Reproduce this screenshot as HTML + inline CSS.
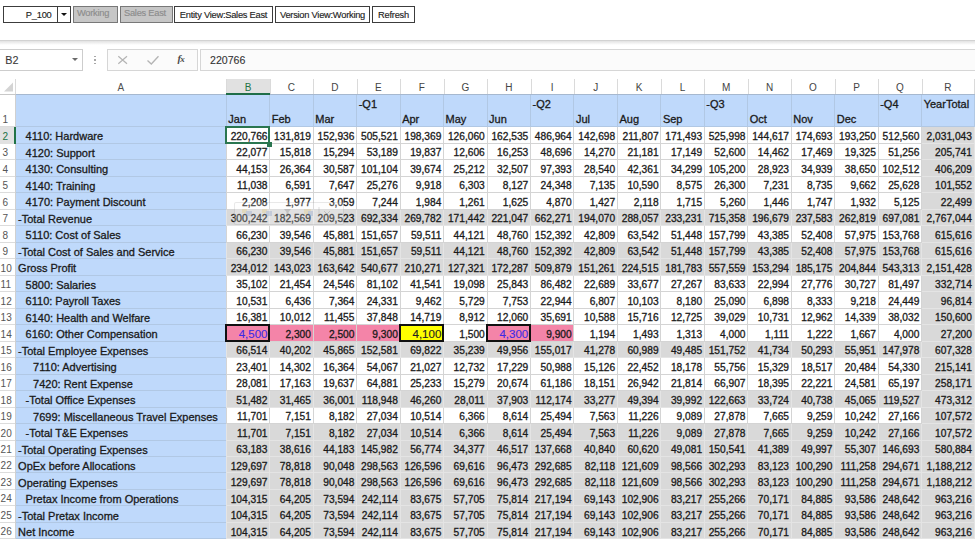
<!DOCTYPE html>
<html><head><meta charset="utf-8"><style>
*{margin:0;padding:0;box-sizing:border-box}
html,body{width:975px;height:539px;overflow:hidden;background:#fff}
body{position:relative;font-family:"Liberation Sans",sans-serif;color:#222}
.a{position:absolute}
.btn{position:absolute;top:6px;height:17px;border:1px solid #3c3c3c;background:#fff;font-size:9.3px;letter-spacing:-0.25px;line-height:16.5px;text-align:center;color:#1e1e1e;white-space:nowrap;-webkit-text-stroke-width:0.15px}
.dis{background:#c6c6c6;color:#8c8c8c;border-color:#787878;text-align:left;padding-left:3px;line-height:13.5px}
.c{position:absolute;white-space:nowrap;font-size:10.2px;color:#1a1a1a;-webkit-text-stroke-width:0.3px}
.n{text-align:right}
.l{font-size:11px}
.ch{position:absolute;top:79.5px;height:15px;font-size:10px;line-height:15px;text-align:center;color:#505050}
.rh{position:absolute;left:0;width:15.6px;font-size:10px;color:#555}
</style></head><body>

<div class="btn" style="left:3px;width:68px;text-align:right;padding-right:18.5px">P_100</div>
<div class="a" style="left:56.5px;top:6px;width:1px;height:17px;background:#3c3c3c"></div>
<div class="a" style="left:61px;top:12.5px;width:0;height:0;border-left:3.2px solid transparent;border-right:3.2px solid transparent;border-top:3.6px solid #111"></div>
<div class="btn dis" style="left:73px;width:45px">Working</div>
<div class="btn dis" style="left:120px;width:53px">Sales East</div>
<div class="btn" style="left:174px;width:99px">Entity View:Sales East</div>
<div class="btn" style="left:275px;width:95px">Version View:Working</div>
<div class="btn" style="left:372px;width:43px">Refresh</div>
<div class="a" style="left:0;top:40px;width:975px;height:1px;background:#d2d2d2"></div>
<div class="a" style="left:0;top:41px;width:975px;height:4px;background:linear-gradient(#e2e2e2,#fff)"></div>
<div class="a" style="left:-1px;top:49px;width:83.5px;height:21.5px;border:1.3px solid #cdcdcd;background:#fff"></div>
<div class="a" style="left:5.2px;top:54px;font-size:10.8px;color:#3a3a3a;-webkit-text-stroke-width:0.1px">B2</div>
<div class="a" style="left:71.5px;top:57.5px;width:0;height:0;border-left:3.2px solid transparent;border-right:3.2px solid transparent;border-top:3.4px solid #6a6a6a"></div>
<div class="a" style="left:94px;top:55.5px;width:2px;height:1.6px;background:#a8a8a8"></div>
<div class="a" style="left:94px;top:59.2px;width:2px;height:1.6px;background:#a8a8a8"></div>
<div class="a" style="left:94px;top:62.5px;width:2px;height:1.6px;background:#a8a8a8"></div>
<div class="a" style="left:107px;top:49px;width:90.8px;height:21.5px;border:1.3px solid #d6d6d6;background:#fbfbfb"></div>
<svg class="a" style="left:117px;top:55px" width="12" height="10"><path d="M1.3 1.2L10 8.8M10 1.2L1.3 8.8" stroke="#b4b4b4" stroke-width="1.2"/></svg>
<svg class="a" style="left:146px;top:55px" width="14" height="10"><path d="M1.5 5.5L5.3 9L12.5 1.2" stroke="#b4b4b4" stroke-width="1.3" fill="none"/></svg>
<div class="a" style="left:177.5px;top:53px;font-family:'Liberation Serif',serif;font-style:italic;font-weight:bold;font-size:10.5px;color:#4a4a4a;letter-spacing:-0.8px">f<span style="font-size:9px">x</span></div>
<div class="a" style="left:200px;top:49px;width:780px;height:21.5px;border:1.3px solid #d6d6d6;background:#fbfbfb"></div>
<div class="a" style="left:210px;top:54px;font-size:10.6px;color:#333;-webkit-text-stroke-width:0.1px">220766</div>
<div class="a" style="left:0;top:79.0px;width:975px;height:15.0px;background:#fff"></div>
<div class="a" style="left:226.3px;top:79.0px;width:43.46px;height:15.0px;background:#e1e1e1"></div>
<svg class="a" style="left:3px;top:82px" width="11" height="10"><path d="M10 0.5L10 9.5L1 9.5Z" fill="#d4d4d4"/></svg>
<div class="a" style="left:15px;top:79.0px;width:1px;height:15.0px;background:#dadada"></div>
<div class="ch" style="left:15.6px;width:210.70000000000002px">A</div>
<div class="ch" style="left:226.3px;width:43.45999999999998px;color:#217346">B</div>
<div class="a" style="left:226.30px;top:79.0px;width:1px;height:15.0px;background:#dadada"></div>
<div class="ch" style="left:269.76px;width:43.460000000000036px;color:#444">C</div>
<div class="a" style="left:269.76px;top:79.0px;width:1px;height:15.0px;background:#dadada"></div>
<div class="ch" style="left:313.22px;width:43.45999999999998px;color:#444">D</div>
<div class="a" style="left:313.22px;top:79.0px;width:1px;height:15.0px;background:#dadada"></div>
<div class="ch" style="left:356.68px;width:43.45999999999998px;color:#444">E</div>
<div class="a" style="left:356.68px;top:79.0px;width:1px;height:15.0px;background:#dadada"></div>
<div class="ch" style="left:400.14px;width:43.460000000000036px;color:#444">F</div>
<div class="a" style="left:400.14px;top:79.0px;width:1px;height:15.0px;background:#dadada"></div>
<div class="ch" style="left:443.6px;width:43.45999999999998px;color:#444">G</div>
<div class="a" style="left:443.60px;top:79.0px;width:1px;height:15.0px;background:#dadada"></div>
<div class="ch" style="left:487.06px;width:43.45999999999998px;color:#444">H</div>
<div class="a" style="left:487.06px;top:79.0px;width:1px;height:15.0px;background:#dadada"></div>
<div class="ch" style="left:530.52px;width:43.460000000000036px;color:#444">I</div>
<div class="a" style="left:530.52px;top:79.0px;width:1px;height:15.0px;background:#dadada"></div>
<div class="ch" style="left:573.98px;width:43.460000000000036px;color:#444">J</div>
<div class="a" style="left:573.98px;top:79.0px;width:1px;height:15.0px;background:#dadada"></div>
<div class="ch" style="left:617.44px;width:43.460000000000036px;color:#444">K</div>
<div class="a" style="left:617.44px;top:79.0px;width:1px;height:15.0px;background:#dadada"></div>
<div class="ch" style="left:660.9000000000001px;width:43.45999999999992px;color:#444">L</div>
<div class="a" style="left:660.90px;top:79.0px;width:1px;height:15.0px;background:#dadada"></div>
<div class="ch" style="left:704.36px;width:43.45999999999992px;color:#444">M</div>
<div class="a" style="left:704.36px;top:79.0px;width:1px;height:15.0px;background:#dadada"></div>
<div class="ch" style="left:747.8199999999999px;width:43.460000000000036px;color:#444">N</div>
<div class="a" style="left:747.82px;top:79.0px;width:1px;height:15.0px;background:#dadada"></div>
<div class="ch" style="left:791.28px;width:43.460000000000036px;color:#444">O</div>
<div class="a" style="left:791.28px;top:79.0px;width:1px;height:15.0px;background:#dadada"></div>
<div class="ch" style="left:834.74px;width:43.460000000000036px;color:#444">P</div>
<div class="a" style="left:834.74px;top:79.0px;width:1px;height:15.0px;background:#dadada"></div>
<div class="ch" style="left:878.2px;width:43.460000000000036px;color:#444">Q</div>
<div class="a" style="left:878.20px;top:79.0px;width:1px;height:15.0px;background:#dadada"></div>
<div class="ch" style="left:921.6600000000001px;width:52.539999999999964px;color:#444">R</div>
<div class="a" style="left:921.66px;top:79.0px;width:1px;height:15.0px;background:#dadada"></div>
<div class="a" style="left:974.2px;top:79.0px;width:1px;height:15.0px;background:#dadada"></div>
<div class="a" style="left:15.6px;top:94.0px;width:210.70000000000002px;height:445.0px;background:#bfd9fb"></div>
<div class="a" style="left:226.3px;top:94.0px;width:747.9000000000001px;height:33.400000000000006px;background:#bfd9fb"></div>
<div class="a" style="left:921.66px;top:127.40px;width:52.54px;height:16.48px;background:#d9d9d9"></div>
<div class="a" style="left:921.66px;top:143.88px;width:52.54px;height:16.48px;background:#d9d9d9"></div>
<div class="a" style="left:921.66px;top:160.36px;width:52.54px;height:16.48px;background:#d9d9d9"></div>
<div class="a" style="left:921.66px;top:176.84px;width:52.54px;height:16.48px;background:#d9d9d9"></div>
<div class="a" style="left:921.66px;top:193.32px;width:52.54px;height:16.48px;background:#d9d9d9"></div>
<div class="a" style="left:226.3px;top:209.80px;width:747.9000000000001px;height:16.48px;background:#d9d9d9"></div>
<div class="a" style="left:921.66px;top:226.28px;width:52.54px;height:16.48px;background:#d9d9d9"></div>
<div class="a" style="left:226.3px;top:242.76px;width:747.9000000000001px;height:16.48px;background:#d9d9d9"></div>
<div class="a" style="left:226.3px;top:259.24px;width:747.9000000000001px;height:16.48px;background:#d9d9d9"></div>
<div class="a" style="left:921.66px;top:275.72px;width:52.54px;height:16.48px;background:#d9d9d9"></div>
<div class="a" style="left:921.66px;top:292.20px;width:52.54px;height:16.48px;background:#d9d9d9"></div>
<div class="a" style="left:921.66px;top:308.68px;width:52.54px;height:16.48px;background:#d9d9d9"></div>
<div class="a" style="left:921.66px;top:325.16px;width:52.54px;height:16.48px;background:#d9d9d9"></div>
<div class="a" style="left:226.3px;top:341.64px;width:747.9000000000001px;height:16.48px;background:#d9d9d9"></div>
<div class="a" style="left:921.66px;top:358.12px;width:52.54px;height:16.48px;background:#d9d9d9"></div>
<div class="a" style="left:921.66px;top:374.60px;width:52.54px;height:16.48px;background:#d9d9d9"></div>
<div class="a" style="left:226.3px;top:391.08px;width:747.9000000000001px;height:16.48px;background:#d9d9d9"></div>
<div class="a" style="left:921.66px;top:407.56px;width:52.54px;height:16.48px;background:#d9d9d9"></div>
<div class="a" style="left:226.3px;top:424.04px;width:747.9000000000001px;height:16.48px;background:#d9d9d9"></div>
<div class="a" style="left:226.3px;top:440.52px;width:747.9000000000001px;height:16.48px;background:#d9d9d9"></div>
<div class="a" style="left:226.3px;top:457.00px;width:747.9000000000001px;height:16.48px;background:#d9d9d9"></div>
<div class="a" style="left:226.3px;top:473.48px;width:747.9000000000001px;height:16.48px;background:#d9d9d9"></div>
<div class="a" style="left:226.3px;top:489.96px;width:747.9000000000001px;height:16.48px;background:#d9d9d9"></div>
<div class="a" style="left:226.3px;top:506.44px;width:747.9000000000001px;height:16.48px;background:#d9d9d9"></div>
<div class="a" style="left:226.3px;top:522.92px;width:747.9000000000001px;height:16.48px;background:#d9d9d9"></div>
<div class="a" style="left:226.30px;top:325.16px;width:43.46px;height:16.48px;background:#f484a8"></div>
<div class="a" style="left:269.76px;top:325.16px;width:43.46px;height:16.48px;background:#f484a8"></div>
<div class="a" style="left:313.22px;top:325.16px;width:43.46px;height:16.48px;background:#f484a8"></div>
<div class="a" style="left:356.68px;top:325.16px;width:43.46px;height:16.48px;background:#f484a8"></div>
<div class="a" style="left:400.14px;top:325.16px;width:43.46px;height:16.48px;background:#ffff00"></div>
<div class="a" style="left:487.06px;top:325.16px;width:43.46px;height:16.48px;background:#f484a8"></div>
<div class="a" style="left:530.52px;top:325.16px;width:43.46px;height:16.48px;background:#f484a8"></div>
<div class="a" style="left:0;top:126.40px;width:15.6px;height:1px;background:#dcdcdc"></div>
<div class="a" style="left:15.6px;top:126.40px;width:210.70000000000002px;height:1px;background:#b1c8e4"></div>
<div class="a" style="left:226.3px;top:126.40px;width:747.9000000000001px;height:1px;background:#b1c8e4"></div>
<div class="a" style="left:0;top:142.88px;width:15.6px;height:1px;background:#dcdcdc"></div>
<div class="a" style="left:15.6px;top:142.88px;width:210.70000000000002px;height:1px;background:#b1c8e4"></div>
<div class="a" style="left:226.3px;top:142.88px;width:695.36px;height:1px;background:#d4d4d4"></div>
<div class="a" style="left:921.66px;top:142.88px;width:52.54px;height:1px;background:#e4e4e4"></div>
<div class="a" style="left:0;top:159.36px;width:15.6px;height:1px;background:#dcdcdc"></div>
<div class="a" style="left:15.6px;top:159.36px;width:210.70000000000002px;height:1px;background:#b1c8e4"></div>
<div class="a" style="left:226.3px;top:159.36px;width:695.36px;height:1px;background:#d4d4d4"></div>
<div class="a" style="left:921.66px;top:159.36px;width:52.54px;height:1px;background:#e4e4e4"></div>
<div class="a" style="left:0;top:175.84px;width:15.6px;height:1px;background:#dcdcdc"></div>
<div class="a" style="left:15.6px;top:175.84px;width:210.70000000000002px;height:1px;background:#b1c8e4"></div>
<div class="a" style="left:226.3px;top:175.84px;width:695.36px;height:1px;background:#d4d4d4"></div>
<div class="a" style="left:921.66px;top:175.84px;width:52.54px;height:1px;background:#e4e4e4"></div>
<div class="a" style="left:0;top:192.32px;width:15.6px;height:1px;background:#dcdcdc"></div>
<div class="a" style="left:15.6px;top:192.32px;width:210.70000000000002px;height:1px;background:#b1c8e4"></div>
<div class="a" style="left:226.3px;top:192.32px;width:695.36px;height:1px;background:#d4d4d4"></div>
<div class="a" style="left:921.66px;top:192.32px;width:52.54px;height:1px;background:#e4e4e4"></div>
<div class="a" style="left:0;top:208.80px;width:15.6px;height:1px;background:#dcdcdc"></div>
<div class="a" style="left:15.6px;top:208.80px;width:210.70000000000002px;height:1px;background:#b1c8e4"></div>
<div class="a" style="left:226.3px;top:208.80px;width:695.36px;height:1px;background:#d4d4d4"></div>
<div class="a" style="left:921.66px;top:208.80px;width:52.54px;height:1px;background:#e4e4e4"></div>
<div class="a" style="left:0;top:225.28px;width:15.6px;height:1px;background:#dcdcdc"></div>
<div class="a" style="left:15.6px;top:225.28px;width:210.70000000000002px;height:1px;background:#b1c8e4"></div>
<div class="a" style="left:226.3px;top:225.28px;width:695.36px;height:1px;background:#e4e4e4"></div>
<div class="a" style="left:921.66px;top:225.28px;width:52.54px;height:1px;background:#e4e4e4"></div>
<div class="a" style="left:0;top:241.76px;width:15.6px;height:1px;background:#dcdcdc"></div>
<div class="a" style="left:15.6px;top:241.76px;width:210.70000000000002px;height:1px;background:#b1c8e4"></div>
<div class="a" style="left:226.3px;top:241.76px;width:695.36px;height:1px;background:#d4d4d4"></div>
<div class="a" style="left:921.66px;top:241.76px;width:52.54px;height:1px;background:#e4e4e4"></div>
<div class="a" style="left:0;top:258.24px;width:15.6px;height:1px;background:#dcdcdc"></div>
<div class="a" style="left:15.6px;top:258.24px;width:210.70000000000002px;height:1px;background:#b1c8e4"></div>
<div class="a" style="left:226.3px;top:258.24px;width:695.36px;height:1px;background:#e4e4e4"></div>
<div class="a" style="left:921.66px;top:258.24px;width:52.54px;height:1px;background:#e4e4e4"></div>
<div class="a" style="left:0;top:274.72px;width:15.6px;height:1px;background:#dcdcdc"></div>
<div class="a" style="left:15.6px;top:274.72px;width:210.70000000000002px;height:1px;background:#b1c8e4"></div>
<div class="a" style="left:226.3px;top:274.72px;width:695.36px;height:1px;background:#e4e4e4"></div>
<div class="a" style="left:921.66px;top:274.72px;width:52.54px;height:1px;background:#e4e4e4"></div>
<div class="a" style="left:0;top:291.20px;width:15.6px;height:1px;background:#dcdcdc"></div>
<div class="a" style="left:15.6px;top:291.20px;width:210.70000000000002px;height:1px;background:#b1c8e4"></div>
<div class="a" style="left:226.3px;top:291.20px;width:695.36px;height:1px;background:#d4d4d4"></div>
<div class="a" style="left:921.66px;top:291.20px;width:52.54px;height:1px;background:#e4e4e4"></div>
<div class="a" style="left:0;top:307.68px;width:15.6px;height:1px;background:#dcdcdc"></div>
<div class="a" style="left:15.6px;top:307.68px;width:210.70000000000002px;height:1px;background:#b1c8e4"></div>
<div class="a" style="left:226.3px;top:307.68px;width:695.36px;height:1px;background:#d4d4d4"></div>
<div class="a" style="left:921.66px;top:307.68px;width:52.54px;height:1px;background:#e4e4e4"></div>
<div class="a" style="left:0;top:324.16px;width:15.6px;height:1px;background:#dcdcdc"></div>
<div class="a" style="left:15.6px;top:324.16px;width:210.70000000000002px;height:1px;background:#b1c8e4"></div>
<div class="a" style="left:226.3px;top:324.16px;width:695.36px;height:1px;background:#d4d4d4"></div>
<div class="a" style="left:921.66px;top:324.16px;width:52.54px;height:1px;background:#e4e4e4"></div>
<div class="a" style="left:0;top:340.64px;width:15.6px;height:1px;background:#dcdcdc"></div>
<div class="a" style="left:15.6px;top:340.64px;width:210.70000000000002px;height:1px;background:#b1c8e4"></div>
<div class="a" style="left:226.3px;top:340.64px;width:695.36px;height:1px;background:#d4d4d4"></div>
<div class="a" style="left:921.66px;top:340.64px;width:52.54px;height:1px;background:#e4e4e4"></div>
<div class="a" style="left:0;top:357.12px;width:15.6px;height:1px;background:#dcdcdc"></div>
<div class="a" style="left:15.6px;top:357.12px;width:210.70000000000002px;height:1px;background:#b1c8e4"></div>
<div class="a" style="left:226.3px;top:357.12px;width:695.36px;height:1px;background:#e4e4e4"></div>
<div class="a" style="left:921.66px;top:357.12px;width:52.54px;height:1px;background:#e4e4e4"></div>
<div class="a" style="left:0;top:373.60px;width:15.6px;height:1px;background:#dcdcdc"></div>
<div class="a" style="left:15.6px;top:373.60px;width:210.70000000000002px;height:1px;background:#b1c8e4"></div>
<div class="a" style="left:226.3px;top:373.60px;width:695.36px;height:1px;background:#d4d4d4"></div>
<div class="a" style="left:921.66px;top:373.60px;width:52.54px;height:1px;background:#e4e4e4"></div>
<div class="a" style="left:0;top:390.08px;width:15.6px;height:1px;background:#dcdcdc"></div>
<div class="a" style="left:15.6px;top:390.08px;width:210.70000000000002px;height:1px;background:#b1c8e4"></div>
<div class="a" style="left:226.3px;top:390.08px;width:695.36px;height:1px;background:#d4d4d4"></div>
<div class="a" style="left:921.66px;top:390.08px;width:52.54px;height:1px;background:#e4e4e4"></div>
<div class="a" style="left:0;top:406.56px;width:15.6px;height:1px;background:#dcdcdc"></div>
<div class="a" style="left:15.6px;top:406.56px;width:210.70000000000002px;height:1px;background:#b1c8e4"></div>
<div class="a" style="left:226.3px;top:406.56px;width:695.36px;height:1px;background:#e4e4e4"></div>
<div class="a" style="left:921.66px;top:406.56px;width:52.54px;height:1px;background:#e4e4e4"></div>
<div class="a" style="left:0;top:423.04px;width:15.6px;height:1px;background:#dcdcdc"></div>
<div class="a" style="left:15.6px;top:423.04px;width:210.70000000000002px;height:1px;background:#b1c8e4"></div>
<div class="a" style="left:226.3px;top:423.04px;width:695.36px;height:1px;background:#d4d4d4"></div>
<div class="a" style="left:921.66px;top:423.04px;width:52.54px;height:1px;background:#e4e4e4"></div>
<div class="a" style="left:0;top:439.52px;width:15.6px;height:1px;background:#dcdcdc"></div>
<div class="a" style="left:15.6px;top:439.52px;width:210.70000000000002px;height:1px;background:#b1c8e4"></div>
<div class="a" style="left:226.3px;top:439.52px;width:695.36px;height:1px;background:#e4e4e4"></div>
<div class="a" style="left:921.66px;top:439.52px;width:52.54px;height:1px;background:#e4e4e4"></div>
<div class="a" style="left:0;top:456.00px;width:15.6px;height:1px;background:#dcdcdc"></div>
<div class="a" style="left:15.6px;top:456.00px;width:210.70000000000002px;height:1px;background:#b1c8e4"></div>
<div class="a" style="left:226.3px;top:456.00px;width:695.36px;height:1px;background:#e4e4e4"></div>
<div class="a" style="left:921.66px;top:456.00px;width:52.54px;height:1px;background:#e4e4e4"></div>
<div class="a" style="left:0;top:472.48px;width:15.6px;height:1px;background:#dcdcdc"></div>
<div class="a" style="left:15.6px;top:472.48px;width:210.70000000000002px;height:1px;background:#b1c8e4"></div>
<div class="a" style="left:226.3px;top:472.48px;width:695.36px;height:1px;background:#e4e4e4"></div>
<div class="a" style="left:921.66px;top:472.48px;width:52.54px;height:1px;background:#e4e4e4"></div>
<div class="a" style="left:0;top:488.96px;width:15.6px;height:1px;background:#dcdcdc"></div>
<div class="a" style="left:15.6px;top:488.96px;width:210.70000000000002px;height:1px;background:#b1c8e4"></div>
<div class="a" style="left:226.3px;top:488.96px;width:695.36px;height:1px;background:#e4e4e4"></div>
<div class="a" style="left:921.66px;top:488.96px;width:52.54px;height:1px;background:#e4e4e4"></div>
<div class="a" style="left:0;top:505.44px;width:15.6px;height:1px;background:#dcdcdc"></div>
<div class="a" style="left:15.6px;top:505.44px;width:210.70000000000002px;height:1px;background:#b1c8e4"></div>
<div class="a" style="left:226.3px;top:505.44px;width:695.36px;height:1px;background:#e4e4e4"></div>
<div class="a" style="left:921.66px;top:505.44px;width:52.54px;height:1px;background:#e4e4e4"></div>
<div class="a" style="left:0;top:521.92px;width:15.6px;height:1px;background:#dcdcdc"></div>
<div class="a" style="left:15.6px;top:521.92px;width:210.70000000000002px;height:1px;background:#b1c8e4"></div>
<div class="a" style="left:226.3px;top:521.92px;width:695.36px;height:1px;background:#e4e4e4"></div>
<div class="a" style="left:921.66px;top:521.92px;width:52.54px;height:1px;background:#e4e4e4"></div>
<div class="a" style="left:0;top:538.40px;width:15.6px;height:1px;background:#dcdcdc"></div>
<div class="a" style="left:15.6px;top:538.40px;width:210.70000000000002px;height:1px;background:#b1c8e4"></div>
<div class="a" style="left:226.3px;top:538.40px;width:695.36px;height:1px;background:#e4e4e4"></div>
<div class="a" style="left:921.66px;top:538.40px;width:52.54px;height:1px;background:#e4e4e4"></div>
<div class="a" style="left:15.1px;top:94.0px;width:1px;height:445.0px;background:#d0d0d0"></div>
<div class="a" style="left:225.80px;top:94.0px;width:1px;height:33.400000000000006px;background:#b1c8e4"></div>
<div class="a" style="left:225.80px;top:127.40px;width:1px;height:16.48px;background:#d4d4d4"></div>
<div class="a" style="left:225.80px;top:143.88px;width:1px;height:16.48px;background:#d4d4d4"></div>
<div class="a" style="left:225.80px;top:160.36px;width:1px;height:16.48px;background:#d4d4d4"></div>
<div class="a" style="left:225.80px;top:176.84px;width:1px;height:16.48px;background:#d4d4d4"></div>
<div class="a" style="left:225.80px;top:193.32px;width:1px;height:16.48px;background:#d4d4d4"></div>
<div class="a" style="left:225.80px;top:209.80px;width:1px;height:16.48px;background:#e4e4e4"></div>
<div class="a" style="left:225.80px;top:226.28px;width:1px;height:16.48px;background:#d4d4d4"></div>
<div class="a" style="left:225.80px;top:242.76px;width:1px;height:16.48px;background:#e4e4e4"></div>
<div class="a" style="left:225.80px;top:259.24px;width:1px;height:16.48px;background:#e4e4e4"></div>
<div class="a" style="left:225.80px;top:275.72px;width:1px;height:16.48px;background:#d4d4d4"></div>
<div class="a" style="left:225.80px;top:292.20px;width:1px;height:16.48px;background:#d4d4d4"></div>
<div class="a" style="left:225.80px;top:308.68px;width:1px;height:16.48px;background:#d4d4d4"></div>
<div class="a" style="left:225.80px;top:325.16px;width:1px;height:16.48px;background:#d4d4d4"></div>
<div class="a" style="left:225.80px;top:341.64px;width:1px;height:16.48px;background:#e4e4e4"></div>
<div class="a" style="left:225.80px;top:358.12px;width:1px;height:16.48px;background:#d4d4d4"></div>
<div class="a" style="left:225.80px;top:374.60px;width:1px;height:16.48px;background:#d4d4d4"></div>
<div class="a" style="left:225.80px;top:391.08px;width:1px;height:16.48px;background:#e4e4e4"></div>
<div class="a" style="left:225.80px;top:407.56px;width:1px;height:16.48px;background:#d4d4d4"></div>
<div class="a" style="left:225.80px;top:424.04px;width:1px;height:16.48px;background:#e4e4e4"></div>
<div class="a" style="left:225.80px;top:440.52px;width:1px;height:16.48px;background:#e4e4e4"></div>
<div class="a" style="left:225.80px;top:457.00px;width:1px;height:16.48px;background:#e4e4e4"></div>
<div class="a" style="left:225.80px;top:473.48px;width:1px;height:16.48px;background:#e4e4e4"></div>
<div class="a" style="left:225.80px;top:489.96px;width:1px;height:16.48px;background:#e4e4e4"></div>
<div class="a" style="left:225.80px;top:506.44px;width:1px;height:16.48px;background:#e4e4e4"></div>
<div class="a" style="left:225.80px;top:522.92px;width:1px;height:16.48px;background:#e4e4e4"></div>
<div class="a" style="left:269.26px;top:94.0px;width:1px;height:33.400000000000006px;background:#b1c8e4"></div>
<div class="a" style="left:269.26px;top:127.40px;width:1px;height:16.48px;background:#d4d4d4"></div>
<div class="a" style="left:269.26px;top:143.88px;width:1px;height:16.48px;background:#d4d4d4"></div>
<div class="a" style="left:269.26px;top:160.36px;width:1px;height:16.48px;background:#d4d4d4"></div>
<div class="a" style="left:269.26px;top:176.84px;width:1px;height:16.48px;background:#d4d4d4"></div>
<div class="a" style="left:269.26px;top:193.32px;width:1px;height:16.48px;background:#d4d4d4"></div>
<div class="a" style="left:269.26px;top:209.80px;width:1px;height:16.48px;background:#e4e4e4"></div>
<div class="a" style="left:269.26px;top:226.28px;width:1px;height:16.48px;background:#d4d4d4"></div>
<div class="a" style="left:269.26px;top:242.76px;width:1px;height:16.48px;background:#e4e4e4"></div>
<div class="a" style="left:269.26px;top:259.24px;width:1px;height:16.48px;background:#e4e4e4"></div>
<div class="a" style="left:269.26px;top:275.72px;width:1px;height:16.48px;background:#d4d4d4"></div>
<div class="a" style="left:269.26px;top:292.20px;width:1px;height:16.48px;background:#d4d4d4"></div>
<div class="a" style="left:269.26px;top:308.68px;width:1px;height:16.48px;background:#d4d4d4"></div>
<div class="a" style="left:269.26px;top:325.16px;width:1px;height:16.48px;background:#d4d4d4"></div>
<div class="a" style="left:269.26px;top:341.64px;width:1px;height:16.48px;background:#e4e4e4"></div>
<div class="a" style="left:269.26px;top:358.12px;width:1px;height:16.48px;background:#d4d4d4"></div>
<div class="a" style="left:269.26px;top:374.60px;width:1px;height:16.48px;background:#d4d4d4"></div>
<div class="a" style="left:269.26px;top:391.08px;width:1px;height:16.48px;background:#e4e4e4"></div>
<div class="a" style="left:269.26px;top:407.56px;width:1px;height:16.48px;background:#d4d4d4"></div>
<div class="a" style="left:269.26px;top:424.04px;width:1px;height:16.48px;background:#e4e4e4"></div>
<div class="a" style="left:269.26px;top:440.52px;width:1px;height:16.48px;background:#e4e4e4"></div>
<div class="a" style="left:269.26px;top:457.00px;width:1px;height:16.48px;background:#e4e4e4"></div>
<div class="a" style="left:269.26px;top:473.48px;width:1px;height:16.48px;background:#e4e4e4"></div>
<div class="a" style="left:269.26px;top:489.96px;width:1px;height:16.48px;background:#e4e4e4"></div>
<div class="a" style="left:269.26px;top:506.44px;width:1px;height:16.48px;background:#e4e4e4"></div>
<div class="a" style="left:269.26px;top:522.92px;width:1px;height:16.48px;background:#e4e4e4"></div>
<div class="a" style="left:312.72px;top:94.0px;width:1px;height:33.400000000000006px;background:#b1c8e4"></div>
<div class="a" style="left:312.72px;top:127.40px;width:1px;height:16.48px;background:#d4d4d4"></div>
<div class="a" style="left:312.72px;top:143.88px;width:1px;height:16.48px;background:#d4d4d4"></div>
<div class="a" style="left:312.72px;top:160.36px;width:1px;height:16.48px;background:#d4d4d4"></div>
<div class="a" style="left:312.72px;top:176.84px;width:1px;height:16.48px;background:#d4d4d4"></div>
<div class="a" style="left:312.72px;top:193.32px;width:1px;height:16.48px;background:#d4d4d4"></div>
<div class="a" style="left:312.72px;top:209.80px;width:1px;height:16.48px;background:#e4e4e4"></div>
<div class="a" style="left:312.72px;top:226.28px;width:1px;height:16.48px;background:#d4d4d4"></div>
<div class="a" style="left:312.72px;top:242.76px;width:1px;height:16.48px;background:#e4e4e4"></div>
<div class="a" style="left:312.72px;top:259.24px;width:1px;height:16.48px;background:#e4e4e4"></div>
<div class="a" style="left:312.72px;top:275.72px;width:1px;height:16.48px;background:#d4d4d4"></div>
<div class="a" style="left:312.72px;top:292.20px;width:1px;height:16.48px;background:#d4d4d4"></div>
<div class="a" style="left:312.72px;top:308.68px;width:1px;height:16.48px;background:#d4d4d4"></div>
<div class="a" style="left:312.72px;top:325.16px;width:1px;height:16.48px;background:#d4d4d4"></div>
<div class="a" style="left:312.72px;top:341.64px;width:1px;height:16.48px;background:#e4e4e4"></div>
<div class="a" style="left:312.72px;top:358.12px;width:1px;height:16.48px;background:#d4d4d4"></div>
<div class="a" style="left:312.72px;top:374.60px;width:1px;height:16.48px;background:#d4d4d4"></div>
<div class="a" style="left:312.72px;top:391.08px;width:1px;height:16.48px;background:#e4e4e4"></div>
<div class="a" style="left:312.72px;top:407.56px;width:1px;height:16.48px;background:#d4d4d4"></div>
<div class="a" style="left:312.72px;top:424.04px;width:1px;height:16.48px;background:#e4e4e4"></div>
<div class="a" style="left:312.72px;top:440.52px;width:1px;height:16.48px;background:#e4e4e4"></div>
<div class="a" style="left:312.72px;top:457.00px;width:1px;height:16.48px;background:#e4e4e4"></div>
<div class="a" style="left:312.72px;top:473.48px;width:1px;height:16.48px;background:#e4e4e4"></div>
<div class="a" style="left:312.72px;top:489.96px;width:1px;height:16.48px;background:#e4e4e4"></div>
<div class="a" style="left:312.72px;top:506.44px;width:1px;height:16.48px;background:#e4e4e4"></div>
<div class="a" style="left:312.72px;top:522.92px;width:1px;height:16.48px;background:#e4e4e4"></div>
<div class="a" style="left:356.18px;top:94.0px;width:1px;height:33.400000000000006px;background:#b1c8e4"></div>
<div class="a" style="left:356.18px;top:127.40px;width:1px;height:16.48px;background:#d4d4d4"></div>
<div class="a" style="left:356.18px;top:143.88px;width:1px;height:16.48px;background:#d4d4d4"></div>
<div class="a" style="left:356.18px;top:160.36px;width:1px;height:16.48px;background:#d4d4d4"></div>
<div class="a" style="left:356.18px;top:176.84px;width:1px;height:16.48px;background:#d4d4d4"></div>
<div class="a" style="left:356.18px;top:193.32px;width:1px;height:16.48px;background:#d4d4d4"></div>
<div class="a" style="left:356.18px;top:209.80px;width:1px;height:16.48px;background:#e4e4e4"></div>
<div class="a" style="left:356.18px;top:226.28px;width:1px;height:16.48px;background:#d4d4d4"></div>
<div class="a" style="left:356.18px;top:242.76px;width:1px;height:16.48px;background:#e4e4e4"></div>
<div class="a" style="left:356.18px;top:259.24px;width:1px;height:16.48px;background:#e4e4e4"></div>
<div class="a" style="left:356.18px;top:275.72px;width:1px;height:16.48px;background:#d4d4d4"></div>
<div class="a" style="left:356.18px;top:292.20px;width:1px;height:16.48px;background:#d4d4d4"></div>
<div class="a" style="left:356.18px;top:308.68px;width:1px;height:16.48px;background:#d4d4d4"></div>
<div class="a" style="left:356.18px;top:325.16px;width:1px;height:16.48px;background:#d4d4d4"></div>
<div class="a" style="left:356.18px;top:341.64px;width:1px;height:16.48px;background:#e4e4e4"></div>
<div class="a" style="left:356.18px;top:358.12px;width:1px;height:16.48px;background:#d4d4d4"></div>
<div class="a" style="left:356.18px;top:374.60px;width:1px;height:16.48px;background:#d4d4d4"></div>
<div class="a" style="left:356.18px;top:391.08px;width:1px;height:16.48px;background:#e4e4e4"></div>
<div class="a" style="left:356.18px;top:407.56px;width:1px;height:16.48px;background:#d4d4d4"></div>
<div class="a" style="left:356.18px;top:424.04px;width:1px;height:16.48px;background:#e4e4e4"></div>
<div class="a" style="left:356.18px;top:440.52px;width:1px;height:16.48px;background:#e4e4e4"></div>
<div class="a" style="left:356.18px;top:457.00px;width:1px;height:16.48px;background:#e4e4e4"></div>
<div class="a" style="left:356.18px;top:473.48px;width:1px;height:16.48px;background:#e4e4e4"></div>
<div class="a" style="left:356.18px;top:489.96px;width:1px;height:16.48px;background:#e4e4e4"></div>
<div class="a" style="left:356.18px;top:506.44px;width:1px;height:16.48px;background:#e4e4e4"></div>
<div class="a" style="left:356.18px;top:522.92px;width:1px;height:16.48px;background:#e4e4e4"></div>
<div class="a" style="left:399.64px;top:94.0px;width:1px;height:33.400000000000006px;background:#b1c8e4"></div>
<div class="a" style="left:399.64px;top:127.40px;width:1px;height:16.48px;background:#d4d4d4"></div>
<div class="a" style="left:399.64px;top:143.88px;width:1px;height:16.48px;background:#d4d4d4"></div>
<div class="a" style="left:399.64px;top:160.36px;width:1px;height:16.48px;background:#d4d4d4"></div>
<div class="a" style="left:399.64px;top:176.84px;width:1px;height:16.48px;background:#d4d4d4"></div>
<div class="a" style="left:399.64px;top:193.32px;width:1px;height:16.48px;background:#d4d4d4"></div>
<div class="a" style="left:399.64px;top:209.80px;width:1px;height:16.48px;background:#e4e4e4"></div>
<div class="a" style="left:399.64px;top:226.28px;width:1px;height:16.48px;background:#d4d4d4"></div>
<div class="a" style="left:399.64px;top:242.76px;width:1px;height:16.48px;background:#e4e4e4"></div>
<div class="a" style="left:399.64px;top:259.24px;width:1px;height:16.48px;background:#e4e4e4"></div>
<div class="a" style="left:399.64px;top:275.72px;width:1px;height:16.48px;background:#d4d4d4"></div>
<div class="a" style="left:399.64px;top:292.20px;width:1px;height:16.48px;background:#d4d4d4"></div>
<div class="a" style="left:399.64px;top:308.68px;width:1px;height:16.48px;background:#d4d4d4"></div>
<div class="a" style="left:399.64px;top:325.16px;width:1px;height:16.48px;background:#d4d4d4"></div>
<div class="a" style="left:399.64px;top:341.64px;width:1px;height:16.48px;background:#e4e4e4"></div>
<div class="a" style="left:399.64px;top:358.12px;width:1px;height:16.48px;background:#d4d4d4"></div>
<div class="a" style="left:399.64px;top:374.60px;width:1px;height:16.48px;background:#d4d4d4"></div>
<div class="a" style="left:399.64px;top:391.08px;width:1px;height:16.48px;background:#e4e4e4"></div>
<div class="a" style="left:399.64px;top:407.56px;width:1px;height:16.48px;background:#d4d4d4"></div>
<div class="a" style="left:399.64px;top:424.04px;width:1px;height:16.48px;background:#e4e4e4"></div>
<div class="a" style="left:399.64px;top:440.52px;width:1px;height:16.48px;background:#e4e4e4"></div>
<div class="a" style="left:399.64px;top:457.00px;width:1px;height:16.48px;background:#e4e4e4"></div>
<div class="a" style="left:399.64px;top:473.48px;width:1px;height:16.48px;background:#e4e4e4"></div>
<div class="a" style="left:399.64px;top:489.96px;width:1px;height:16.48px;background:#e4e4e4"></div>
<div class="a" style="left:399.64px;top:506.44px;width:1px;height:16.48px;background:#e4e4e4"></div>
<div class="a" style="left:399.64px;top:522.92px;width:1px;height:16.48px;background:#e4e4e4"></div>
<div class="a" style="left:443.10px;top:94.0px;width:1px;height:33.400000000000006px;background:#b1c8e4"></div>
<div class="a" style="left:443.10px;top:127.40px;width:1px;height:16.48px;background:#d4d4d4"></div>
<div class="a" style="left:443.10px;top:143.88px;width:1px;height:16.48px;background:#d4d4d4"></div>
<div class="a" style="left:443.10px;top:160.36px;width:1px;height:16.48px;background:#d4d4d4"></div>
<div class="a" style="left:443.10px;top:176.84px;width:1px;height:16.48px;background:#d4d4d4"></div>
<div class="a" style="left:443.10px;top:193.32px;width:1px;height:16.48px;background:#d4d4d4"></div>
<div class="a" style="left:443.10px;top:209.80px;width:1px;height:16.48px;background:#e4e4e4"></div>
<div class="a" style="left:443.10px;top:226.28px;width:1px;height:16.48px;background:#d4d4d4"></div>
<div class="a" style="left:443.10px;top:242.76px;width:1px;height:16.48px;background:#e4e4e4"></div>
<div class="a" style="left:443.10px;top:259.24px;width:1px;height:16.48px;background:#e4e4e4"></div>
<div class="a" style="left:443.10px;top:275.72px;width:1px;height:16.48px;background:#d4d4d4"></div>
<div class="a" style="left:443.10px;top:292.20px;width:1px;height:16.48px;background:#d4d4d4"></div>
<div class="a" style="left:443.10px;top:308.68px;width:1px;height:16.48px;background:#d4d4d4"></div>
<div class="a" style="left:443.10px;top:325.16px;width:1px;height:16.48px;background:#d4d4d4"></div>
<div class="a" style="left:443.10px;top:341.64px;width:1px;height:16.48px;background:#e4e4e4"></div>
<div class="a" style="left:443.10px;top:358.12px;width:1px;height:16.48px;background:#d4d4d4"></div>
<div class="a" style="left:443.10px;top:374.60px;width:1px;height:16.48px;background:#d4d4d4"></div>
<div class="a" style="left:443.10px;top:391.08px;width:1px;height:16.48px;background:#e4e4e4"></div>
<div class="a" style="left:443.10px;top:407.56px;width:1px;height:16.48px;background:#d4d4d4"></div>
<div class="a" style="left:443.10px;top:424.04px;width:1px;height:16.48px;background:#e4e4e4"></div>
<div class="a" style="left:443.10px;top:440.52px;width:1px;height:16.48px;background:#e4e4e4"></div>
<div class="a" style="left:443.10px;top:457.00px;width:1px;height:16.48px;background:#e4e4e4"></div>
<div class="a" style="left:443.10px;top:473.48px;width:1px;height:16.48px;background:#e4e4e4"></div>
<div class="a" style="left:443.10px;top:489.96px;width:1px;height:16.48px;background:#e4e4e4"></div>
<div class="a" style="left:443.10px;top:506.44px;width:1px;height:16.48px;background:#e4e4e4"></div>
<div class="a" style="left:443.10px;top:522.92px;width:1px;height:16.48px;background:#e4e4e4"></div>
<div class="a" style="left:486.56px;top:94.0px;width:1px;height:33.400000000000006px;background:#b1c8e4"></div>
<div class="a" style="left:486.56px;top:127.40px;width:1px;height:16.48px;background:#d4d4d4"></div>
<div class="a" style="left:486.56px;top:143.88px;width:1px;height:16.48px;background:#d4d4d4"></div>
<div class="a" style="left:486.56px;top:160.36px;width:1px;height:16.48px;background:#d4d4d4"></div>
<div class="a" style="left:486.56px;top:176.84px;width:1px;height:16.48px;background:#d4d4d4"></div>
<div class="a" style="left:486.56px;top:193.32px;width:1px;height:16.48px;background:#d4d4d4"></div>
<div class="a" style="left:486.56px;top:209.80px;width:1px;height:16.48px;background:#e4e4e4"></div>
<div class="a" style="left:486.56px;top:226.28px;width:1px;height:16.48px;background:#d4d4d4"></div>
<div class="a" style="left:486.56px;top:242.76px;width:1px;height:16.48px;background:#e4e4e4"></div>
<div class="a" style="left:486.56px;top:259.24px;width:1px;height:16.48px;background:#e4e4e4"></div>
<div class="a" style="left:486.56px;top:275.72px;width:1px;height:16.48px;background:#d4d4d4"></div>
<div class="a" style="left:486.56px;top:292.20px;width:1px;height:16.48px;background:#d4d4d4"></div>
<div class="a" style="left:486.56px;top:308.68px;width:1px;height:16.48px;background:#d4d4d4"></div>
<div class="a" style="left:486.56px;top:325.16px;width:1px;height:16.48px;background:#d4d4d4"></div>
<div class="a" style="left:486.56px;top:341.64px;width:1px;height:16.48px;background:#e4e4e4"></div>
<div class="a" style="left:486.56px;top:358.12px;width:1px;height:16.48px;background:#d4d4d4"></div>
<div class="a" style="left:486.56px;top:374.60px;width:1px;height:16.48px;background:#d4d4d4"></div>
<div class="a" style="left:486.56px;top:391.08px;width:1px;height:16.48px;background:#e4e4e4"></div>
<div class="a" style="left:486.56px;top:407.56px;width:1px;height:16.48px;background:#d4d4d4"></div>
<div class="a" style="left:486.56px;top:424.04px;width:1px;height:16.48px;background:#e4e4e4"></div>
<div class="a" style="left:486.56px;top:440.52px;width:1px;height:16.48px;background:#e4e4e4"></div>
<div class="a" style="left:486.56px;top:457.00px;width:1px;height:16.48px;background:#e4e4e4"></div>
<div class="a" style="left:486.56px;top:473.48px;width:1px;height:16.48px;background:#e4e4e4"></div>
<div class="a" style="left:486.56px;top:489.96px;width:1px;height:16.48px;background:#e4e4e4"></div>
<div class="a" style="left:486.56px;top:506.44px;width:1px;height:16.48px;background:#e4e4e4"></div>
<div class="a" style="left:486.56px;top:522.92px;width:1px;height:16.48px;background:#e4e4e4"></div>
<div class="a" style="left:530.02px;top:94.0px;width:1px;height:33.400000000000006px;background:#b1c8e4"></div>
<div class="a" style="left:530.02px;top:127.40px;width:1px;height:16.48px;background:#d4d4d4"></div>
<div class="a" style="left:530.02px;top:143.88px;width:1px;height:16.48px;background:#d4d4d4"></div>
<div class="a" style="left:530.02px;top:160.36px;width:1px;height:16.48px;background:#d4d4d4"></div>
<div class="a" style="left:530.02px;top:176.84px;width:1px;height:16.48px;background:#d4d4d4"></div>
<div class="a" style="left:530.02px;top:193.32px;width:1px;height:16.48px;background:#d4d4d4"></div>
<div class="a" style="left:530.02px;top:209.80px;width:1px;height:16.48px;background:#e4e4e4"></div>
<div class="a" style="left:530.02px;top:226.28px;width:1px;height:16.48px;background:#d4d4d4"></div>
<div class="a" style="left:530.02px;top:242.76px;width:1px;height:16.48px;background:#e4e4e4"></div>
<div class="a" style="left:530.02px;top:259.24px;width:1px;height:16.48px;background:#e4e4e4"></div>
<div class="a" style="left:530.02px;top:275.72px;width:1px;height:16.48px;background:#d4d4d4"></div>
<div class="a" style="left:530.02px;top:292.20px;width:1px;height:16.48px;background:#d4d4d4"></div>
<div class="a" style="left:530.02px;top:308.68px;width:1px;height:16.48px;background:#d4d4d4"></div>
<div class="a" style="left:530.02px;top:325.16px;width:1px;height:16.48px;background:#d4d4d4"></div>
<div class="a" style="left:530.02px;top:341.64px;width:1px;height:16.48px;background:#e4e4e4"></div>
<div class="a" style="left:530.02px;top:358.12px;width:1px;height:16.48px;background:#d4d4d4"></div>
<div class="a" style="left:530.02px;top:374.60px;width:1px;height:16.48px;background:#d4d4d4"></div>
<div class="a" style="left:530.02px;top:391.08px;width:1px;height:16.48px;background:#e4e4e4"></div>
<div class="a" style="left:530.02px;top:407.56px;width:1px;height:16.48px;background:#d4d4d4"></div>
<div class="a" style="left:530.02px;top:424.04px;width:1px;height:16.48px;background:#e4e4e4"></div>
<div class="a" style="left:530.02px;top:440.52px;width:1px;height:16.48px;background:#e4e4e4"></div>
<div class="a" style="left:530.02px;top:457.00px;width:1px;height:16.48px;background:#e4e4e4"></div>
<div class="a" style="left:530.02px;top:473.48px;width:1px;height:16.48px;background:#e4e4e4"></div>
<div class="a" style="left:530.02px;top:489.96px;width:1px;height:16.48px;background:#e4e4e4"></div>
<div class="a" style="left:530.02px;top:506.44px;width:1px;height:16.48px;background:#e4e4e4"></div>
<div class="a" style="left:530.02px;top:522.92px;width:1px;height:16.48px;background:#e4e4e4"></div>
<div class="a" style="left:573.48px;top:94.0px;width:1px;height:33.400000000000006px;background:#b1c8e4"></div>
<div class="a" style="left:573.48px;top:127.40px;width:1px;height:16.48px;background:#d4d4d4"></div>
<div class="a" style="left:573.48px;top:143.88px;width:1px;height:16.48px;background:#d4d4d4"></div>
<div class="a" style="left:573.48px;top:160.36px;width:1px;height:16.48px;background:#d4d4d4"></div>
<div class="a" style="left:573.48px;top:176.84px;width:1px;height:16.48px;background:#d4d4d4"></div>
<div class="a" style="left:573.48px;top:193.32px;width:1px;height:16.48px;background:#d4d4d4"></div>
<div class="a" style="left:573.48px;top:209.80px;width:1px;height:16.48px;background:#e4e4e4"></div>
<div class="a" style="left:573.48px;top:226.28px;width:1px;height:16.48px;background:#d4d4d4"></div>
<div class="a" style="left:573.48px;top:242.76px;width:1px;height:16.48px;background:#e4e4e4"></div>
<div class="a" style="left:573.48px;top:259.24px;width:1px;height:16.48px;background:#e4e4e4"></div>
<div class="a" style="left:573.48px;top:275.72px;width:1px;height:16.48px;background:#d4d4d4"></div>
<div class="a" style="left:573.48px;top:292.20px;width:1px;height:16.48px;background:#d4d4d4"></div>
<div class="a" style="left:573.48px;top:308.68px;width:1px;height:16.48px;background:#d4d4d4"></div>
<div class="a" style="left:573.48px;top:325.16px;width:1px;height:16.48px;background:#d4d4d4"></div>
<div class="a" style="left:573.48px;top:341.64px;width:1px;height:16.48px;background:#e4e4e4"></div>
<div class="a" style="left:573.48px;top:358.12px;width:1px;height:16.48px;background:#d4d4d4"></div>
<div class="a" style="left:573.48px;top:374.60px;width:1px;height:16.48px;background:#d4d4d4"></div>
<div class="a" style="left:573.48px;top:391.08px;width:1px;height:16.48px;background:#e4e4e4"></div>
<div class="a" style="left:573.48px;top:407.56px;width:1px;height:16.48px;background:#d4d4d4"></div>
<div class="a" style="left:573.48px;top:424.04px;width:1px;height:16.48px;background:#e4e4e4"></div>
<div class="a" style="left:573.48px;top:440.52px;width:1px;height:16.48px;background:#e4e4e4"></div>
<div class="a" style="left:573.48px;top:457.00px;width:1px;height:16.48px;background:#e4e4e4"></div>
<div class="a" style="left:573.48px;top:473.48px;width:1px;height:16.48px;background:#e4e4e4"></div>
<div class="a" style="left:573.48px;top:489.96px;width:1px;height:16.48px;background:#e4e4e4"></div>
<div class="a" style="left:573.48px;top:506.44px;width:1px;height:16.48px;background:#e4e4e4"></div>
<div class="a" style="left:573.48px;top:522.92px;width:1px;height:16.48px;background:#e4e4e4"></div>
<div class="a" style="left:616.94px;top:94.0px;width:1px;height:33.400000000000006px;background:#b1c8e4"></div>
<div class="a" style="left:616.94px;top:127.40px;width:1px;height:16.48px;background:#d4d4d4"></div>
<div class="a" style="left:616.94px;top:143.88px;width:1px;height:16.48px;background:#d4d4d4"></div>
<div class="a" style="left:616.94px;top:160.36px;width:1px;height:16.48px;background:#d4d4d4"></div>
<div class="a" style="left:616.94px;top:176.84px;width:1px;height:16.48px;background:#d4d4d4"></div>
<div class="a" style="left:616.94px;top:193.32px;width:1px;height:16.48px;background:#d4d4d4"></div>
<div class="a" style="left:616.94px;top:209.80px;width:1px;height:16.48px;background:#e4e4e4"></div>
<div class="a" style="left:616.94px;top:226.28px;width:1px;height:16.48px;background:#d4d4d4"></div>
<div class="a" style="left:616.94px;top:242.76px;width:1px;height:16.48px;background:#e4e4e4"></div>
<div class="a" style="left:616.94px;top:259.24px;width:1px;height:16.48px;background:#e4e4e4"></div>
<div class="a" style="left:616.94px;top:275.72px;width:1px;height:16.48px;background:#d4d4d4"></div>
<div class="a" style="left:616.94px;top:292.20px;width:1px;height:16.48px;background:#d4d4d4"></div>
<div class="a" style="left:616.94px;top:308.68px;width:1px;height:16.48px;background:#d4d4d4"></div>
<div class="a" style="left:616.94px;top:325.16px;width:1px;height:16.48px;background:#d4d4d4"></div>
<div class="a" style="left:616.94px;top:341.64px;width:1px;height:16.48px;background:#e4e4e4"></div>
<div class="a" style="left:616.94px;top:358.12px;width:1px;height:16.48px;background:#d4d4d4"></div>
<div class="a" style="left:616.94px;top:374.60px;width:1px;height:16.48px;background:#d4d4d4"></div>
<div class="a" style="left:616.94px;top:391.08px;width:1px;height:16.48px;background:#e4e4e4"></div>
<div class="a" style="left:616.94px;top:407.56px;width:1px;height:16.48px;background:#d4d4d4"></div>
<div class="a" style="left:616.94px;top:424.04px;width:1px;height:16.48px;background:#e4e4e4"></div>
<div class="a" style="left:616.94px;top:440.52px;width:1px;height:16.48px;background:#e4e4e4"></div>
<div class="a" style="left:616.94px;top:457.00px;width:1px;height:16.48px;background:#e4e4e4"></div>
<div class="a" style="left:616.94px;top:473.48px;width:1px;height:16.48px;background:#e4e4e4"></div>
<div class="a" style="left:616.94px;top:489.96px;width:1px;height:16.48px;background:#e4e4e4"></div>
<div class="a" style="left:616.94px;top:506.44px;width:1px;height:16.48px;background:#e4e4e4"></div>
<div class="a" style="left:616.94px;top:522.92px;width:1px;height:16.48px;background:#e4e4e4"></div>
<div class="a" style="left:660.40px;top:94.0px;width:1px;height:33.400000000000006px;background:#b1c8e4"></div>
<div class="a" style="left:660.40px;top:127.40px;width:1px;height:16.48px;background:#d4d4d4"></div>
<div class="a" style="left:660.40px;top:143.88px;width:1px;height:16.48px;background:#d4d4d4"></div>
<div class="a" style="left:660.40px;top:160.36px;width:1px;height:16.48px;background:#d4d4d4"></div>
<div class="a" style="left:660.40px;top:176.84px;width:1px;height:16.48px;background:#d4d4d4"></div>
<div class="a" style="left:660.40px;top:193.32px;width:1px;height:16.48px;background:#d4d4d4"></div>
<div class="a" style="left:660.40px;top:209.80px;width:1px;height:16.48px;background:#e4e4e4"></div>
<div class="a" style="left:660.40px;top:226.28px;width:1px;height:16.48px;background:#d4d4d4"></div>
<div class="a" style="left:660.40px;top:242.76px;width:1px;height:16.48px;background:#e4e4e4"></div>
<div class="a" style="left:660.40px;top:259.24px;width:1px;height:16.48px;background:#e4e4e4"></div>
<div class="a" style="left:660.40px;top:275.72px;width:1px;height:16.48px;background:#d4d4d4"></div>
<div class="a" style="left:660.40px;top:292.20px;width:1px;height:16.48px;background:#d4d4d4"></div>
<div class="a" style="left:660.40px;top:308.68px;width:1px;height:16.48px;background:#d4d4d4"></div>
<div class="a" style="left:660.40px;top:325.16px;width:1px;height:16.48px;background:#d4d4d4"></div>
<div class="a" style="left:660.40px;top:341.64px;width:1px;height:16.48px;background:#e4e4e4"></div>
<div class="a" style="left:660.40px;top:358.12px;width:1px;height:16.48px;background:#d4d4d4"></div>
<div class="a" style="left:660.40px;top:374.60px;width:1px;height:16.48px;background:#d4d4d4"></div>
<div class="a" style="left:660.40px;top:391.08px;width:1px;height:16.48px;background:#e4e4e4"></div>
<div class="a" style="left:660.40px;top:407.56px;width:1px;height:16.48px;background:#d4d4d4"></div>
<div class="a" style="left:660.40px;top:424.04px;width:1px;height:16.48px;background:#e4e4e4"></div>
<div class="a" style="left:660.40px;top:440.52px;width:1px;height:16.48px;background:#e4e4e4"></div>
<div class="a" style="left:660.40px;top:457.00px;width:1px;height:16.48px;background:#e4e4e4"></div>
<div class="a" style="left:660.40px;top:473.48px;width:1px;height:16.48px;background:#e4e4e4"></div>
<div class="a" style="left:660.40px;top:489.96px;width:1px;height:16.48px;background:#e4e4e4"></div>
<div class="a" style="left:660.40px;top:506.44px;width:1px;height:16.48px;background:#e4e4e4"></div>
<div class="a" style="left:660.40px;top:522.92px;width:1px;height:16.48px;background:#e4e4e4"></div>
<div class="a" style="left:703.86px;top:94.0px;width:1px;height:33.400000000000006px;background:#b1c8e4"></div>
<div class="a" style="left:703.86px;top:127.40px;width:1px;height:16.48px;background:#d4d4d4"></div>
<div class="a" style="left:703.86px;top:143.88px;width:1px;height:16.48px;background:#d4d4d4"></div>
<div class="a" style="left:703.86px;top:160.36px;width:1px;height:16.48px;background:#d4d4d4"></div>
<div class="a" style="left:703.86px;top:176.84px;width:1px;height:16.48px;background:#d4d4d4"></div>
<div class="a" style="left:703.86px;top:193.32px;width:1px;height:16.48px;background:#d4d4d4"></div>
<div class="a" style="left:703.86px;top:209.80px;width:1px;height:16.48px;background:#e4e4e4"></div>
<div class="a" style="left:703.86px;top:226.28px;width:1px;height:16.48px;background:#d4d4d4"></div>
<div class="a" style="left:703.86px;top:242.76px;width:1px;height:16.48px;background:#e4e4e4"></div>
<div class="a" style="left:703.86px;top:259.24px;width:1px;height:16.48px;background:#e4e4e4"></div>
<div class="a" style="left:703.86px;top:275.72px;width:1px;height:16.48px;background:#d4d4d4"></div>
<div class="a" style="left:703.86px;top:292.20px;width:1px;height:16.48px;background:#d4d4d4"></div>
<div class="a" style="left:703.86px;top:308.68px;width:1px;height:16.48px;background:#d4d4d4"></div>
<div class="a" style="left:703.86px;top:325.16px;width:1px;height:16.48px;background:#d4d4d4"></div>
<div class="a" style="left:703.86px;top:341.64px;width:1px;height:16.48px;background:#e4e4e4"></div>
<div class="a" style="left:703.86px;top:358.12px;width:1px;height:16.48px;background:#d4d4d4"></div>
<div class="a" style="left:703.86px;top:374.60px;width:1px;height:16.48px;background:#d4d4d4"></div>
<div class="a" style="left:703.86px;top:391.08px;width:1px;height:16.48px;background:#e4e4e4"></div>
<div class="a" style="left:703.86px;top:407.56px;width:1px;height:16.48px;background:#d4d4d4"></div>
<div class="a" style="left:703.86px;top:424.04px;width:1px;height:16.48px;background:#e4e4e4"></div>
<div class="a" style="left:703.86px;top:440.52px;width:1px;height:16.48px;background:#e4e4e4"></div>
<div class="a" style="left:703.86px;top:457.00px;width:1px;height:16.48px;background:#e4e4e4"></div>
<div class="a" style="left:703.86px;top:473.48px;width:1px;height:16.48px;background:#e4e4e4"></div>
<div class="a" style="left:703.86px;top:489.96px;width:1px;height:16.48px;background:#e4e4e4"></div>
<div class="a" style="left:703.86px;top:506.44px;width:1px;height:16.48px;background:#e4e4e4"></div>
<div class="a" style="left:703.86px;top:522.92px;width:1px;height:16.48px;background:#e4e4e4"></div>
<div class="a" style="left:747.32px;top:94.0px;width:1px;height:33.400000000000006px;background:#b1c8e4"></div>
<div class="a" style="left:747.32px;top:127.40px;width:1px;height:16.48px;background:#d4d4d4"></div>
<div class="a" style="left:747.32px;top:143.88px;width:1px;height:16.48px;background:#d4d4d4"></div>
<div class="a" style="left:747.32px;top:160.36px;width:1px;height:16.48px;background:#d4d4d4"></div>
<div class="a" style="left:747.32px;top:176.84px;width:1px;height:16.48px;background:#d4d4d4"></div>
<div class="a" style="left:747.32px;top:193.32px;width:1px;height:16.48px;background:#d4d4d4"></div>
<div class="a" style="left:747.32px;top:209.80px;width:1px;height:16.48px;background:#e4e4e4"></div>
<div class="a" style="left:747.32px;top:226.28px;width:1px;height:16.48px;background:#d4d4d4"></div>
<div class="a" style="left:747.32px;top:242.76px;width:1px;height:16.48px;background:#e4e4e4"></div>
<div class="a" style="left:747.32px;top:259.24px;width:1px;height:16.48px;background:#e4e4e4"></div>
<div class="a" style="left:747.32px;top:275.72px;width:1px;height:16.48px;background:#d4d4d4"></div>
<div class="a" style="left:747.32px;top:292.20px;width:1px;height:16.48px;background:#d4d4d4"></div>
<div class="a" style="left:747.32px;top:308.68px;width:1px;height:16.48px;background:#d4d4d4"></div>
<div class="a" style="left:747.32px;top:325.16px;width:1px;height:16.48px;background:#d4d4d4"></div>
<div class="a" style="left:747.32px;top:341.64px;width:1px;height:16.48px;background:#e4e4e4"></div>
<div class="a" style="left:747.32px;top:358.12px;width:1px;height:16.48px;background:#d4d4d4"></div>
<div class="a" style="left:747.32px;top:374.60px;width:1px;height:16.48px;background:#d4d4d4"></div>
<div class="a" style="left:747.32px;top:391.08px;width:1px;height:16.48px;background:#e4e4e4"></div>
<div class="a" style="left:747.32px;top:407.56px;width:1px;height:16.48px;background:#d4d4d4"></div>
<div class="a" style="left:747.32px;top:424.04px;width:1px;height:16.48px;background:#e4e4e4"></div>
<div class="a" style="left:747.32px;top:440.52px;width:1px;height:16.48px;background:#e4e4e4"></div>
<div class="a" style="left:747.32px;top:457.00px;width:1px;height:16.48px;background:#e4e4e4"></div>
<div class="a" style="left:747.32px;top:473.48px;width:1px;height:16.48px;background:#e4e4e4"></div>
<div class="a" style="left:747.32px;top:489.96px;width:1px;height:16.48px;background:#e4e4e4"></div>
<div class="a" style="left:747.32px;top:506.44px;width:1px;height:16.48px;background:#e4e4e4"></div>
<div class="a" style="left:747.32px;top:522.92px;width:1px;height:16.48px;background:#e4e4e4"></div>
<div class="a" style="left:790.78px;top:94.0px;width:1px;height:33.400000000000006px;background:#b1c8e4"></div>
<div class="a" style="left:790.78px;top:127.40px;width:1px;height:16.48px;background:#d4d4d4"></div>
<div class="a" style="left:790.78px;top:143.88px;width:1px;height:16.48px;background:#d4d4d4"></div>
<div class="a" style="left:790.78px;top:160.36px;width:1px;height:16.48px;background:#d4d4d4"></div>
<div class="a" style="left:790.78px;top:176.84px;width:1px;height:16.48px;background:#d4d4d4"></div>
<div class="a" style="left:790.78px;top:193.32px;width:1px;height:16.48px;background:#d4d4d4"></div>
<div class="a" style="left:790.78px;top:209.80px;width:1px;height:16.48px;background:#e4e4e4"></div>
<div class="a" style="left:790.78px;top:226.28px;width:1px;height:16.48px;background:#d4d4d4"></div>
<div class="a" style="left:790.78px;top:242.76px;width:1px;height:16.48px;background:#e4e4e4"></div>
<div class="a" style="left:790.78px;top:259.24px;width:1px;height:16.48px;background:#e4e4e4"></div>
<div class="a" style="left:790.78px;top:275.72px;width:1px;height:16.48px;background:#d4d4d4"></div>
<div class="a" style="left:790.78px;top:292.20px;width:1px;height:16.48px;background:#d4d4d4"></div>
<div class="a" style="left:790.78px;top:308.68px;width:1px;height:16.48px;background:#d4d4d4"></div>
<div class="a" style="left:790.78px;top:325.16px;width:1px;height:16.48px;background:#d4d4d4"></div>
<div class="a" style="left:790.78px;top:341.64px;width:1px;height:16.48px;background:#e4e4e4"></div>
<div class="a" style="left:790.78px;top:358.12px;width:1px;height:16.48px;background:#d4d4d4"></div>
<div class="a" style="left:790.78px;top:374.60px;width:1px;height:16.48px;background:#d4d4d4"></div>
<div class="a" style="left:790.78px;top:391.08px;width:1px;height:16.48px;background:#e4e4e4"></div>
<div class="a" style="left:790.78px;top:407.56px;width:1px;height:16.48px;background:#d4d4d4"></div>
<div class="a" style="left:790.78px;top:424.04px;width:1px;height:16.48px;background:#e4e4e4"></div>
<div class="a" style="left:790.78px;top:440.52px;width:1px;height:16.48px;background:#e4e4e4"></div>
<div class="a" style="left:790.78px;top:457.00px;width:1px;height:16.48px;background:#e4e4e4"></div>
<div class="a" style="left:790.78px;top:473.48px;width:1px;height:16.48px;background:#e4e4e4"></div>
<div class="a" style="left:790.78px;top:489.96px;width:1px;height:16.48px;background:#e4e4e4"></div>
<div class="a" style="left:790.78px;top:506.44px;width:1px;height:16.48px;background:#e4e4e4"></div>
<div class="a" style="left:790.78px;top:522.92px;width:1px;height:16.48px;background:#e4e4e4"></div>
<div class="a" style="left:834.24px;top:94.0px;width:1px;height:33.400000000000006px;background:#b1c8e4"></div>
<div class="a" style="left:834.24px;top:127.40px;width:1px;height:16.48px;background:#d4d4d4"></div>
<div class="a" style="left:834.24px;top:143.88px;width:1px;height:16.48px;background:#d4d4d4"></div>
<div class="a" style="left:834.24px;top:160.36px;width:1px;height:16.48px;background:#d4d4d4"></div>
<div class="a" style="left:834.24px;top:176.84px;width:1px;height:16.48px;background:#d4d4d4"></div>
<div class="a" style="left:834.24px;top:193.32px;width:1px;height:16.48px;background:#d4d4d4"></div>
<div class="a" style="left:834.24px;top:209.80px;width:1px;height:16.48px;background:#e4e4e4"></div>
<div class="a" style="left:834.24px;top:226.28px;width:1px;height:16.48px;background:#d4d4d4"></div>
<div class="a" style="left:834.24px;top:242.76px;width:1px;height:16.48px;background:#e4e4e4"></div>
<div class="a" style="left:834.24px;top:259.24px;width:1px;height:16.48px;background:#e4e4e4"></div>
<div class="a" style="left:834.24px;top:275.72px;width:1px;height:16.48px;background:#d4d4d4"></div>
<div class="a" style="left:834.24px;top:292.20px;width:1px;height:16.48px;background:#d4d4d4"></div>
<div class="a" style="left:834.24px;top:308.68px;width:1px;height:16.48px;background:#d4d4d4"></div>
<div class="a" style="left:834.24px;top:325.16px;width:1px;height:16.48px;background:#d4d4d4"></div>
<div class="a" style="left:834.24px;top:341.64px;width:1px;height:16.48px;background:#e4e4e4"></div>
<div class="a" style="left:834.24px;top:358.12px;width:1px;height:16.48px;background:#d4d4d4"></div>
<div class="a" style="left:834.24px;top:374.60px;width:1px;height:16.48px;background:#d4d4d4"></div>
<div class="a" style="left:834.24px;top:391.08px;width:1px;height:16.48px;background:#e4e4e4"></div>
<div class="a" style="left:834.24px;top:407.56px;width:1px;height:16.48px;background:#d4d4d4"></div>
<div class="a" style="left:834.24px;top:424.04px;width:1px;height:16.48px;background:#e4e4e4"></div>
<div class="a" style="left:834.24px;top:440.52px;width:1px;height:16.48px;background:#e4e4e4"></div>
<div class="a" style="left:834.24px;top:457.00px;width:1px;height:16.48px;background:#e4e4e4"></div>
<div class="a" style="left:834.24px;top:473.48px;width:1px;height:16.48px;background:#e4e4e4"></div>
<div class="a" style="left:834.24px;top:489.96px;width:1px;height:16.48px;background:#e4e4e4"></div>
<div class="a" style="left:834.24px;top:506.44px;width:1px;height:16.48px;background:#e4e4e4"></div>
<div class="a" style="left:834.24px;top:522.92px;width:1px;height:16.48px;background:#e4e4e4"></div>
<div class="a" style="left:877.70px;top:94.0px;width:1px;height:33.400000000000006px;background:#b1c8e4"></div>
<div class="a" style="left:877.70px;top:127.40px;width:1px;height:16.48px;background:#d4d4d4"></div>
<div class="a" style="left:877.70px;top:143.88px;width:1px;height:16.48px;background:#d4d4d4"></div>
<div class="a" style="left:877.70px;top:160.36px;width:1px;height:16.48px;background:#d4d4d4"></div>
<div class="a" style="left:877.70px;top:176.84px;width:1px;height:16.48px;background:#d4d4d4"></div>
<div class="a" style="left:877.70px;top:193.32px;width:1px;height:16.48px;background:#d4d4d4"></div>
<div class="a" style="left:877.70px;top:209.80px;width:1px;height:16.48px;background:#e4e4e4"></div>
<div class="a" style="left:877.70px;top:226.28px;width:1px;height:16.48px;background:#d4d4d4"></div>
<div class="a" style="left:877.70px;top:242.76px;width:1px;height:16.48px;background:#e4e4e4"></div>
<div class="a" style="left:877.70px;top:259.24px;width:1px;height:16.48px;background:#e4e4e4"></div>
<div class="a" style="left:877.70px;top:275.72px;width:1px;height:16.48px;background:#d4d4d4"></div>
<div class="a" style="left:877.70px;top:292.20px;width:1px;height:16.48px;background:#d4d4d4"></div>
<div class="a" style="left:877.70px;top:308.68px;width:1px;height:16.48px;background:#d4d4d4"></div>
<div class="a" style="left:877.70px;top:325.16px;width:1px;height:16.48px;background:#d4d4d4"></div>
<div class="a" style="left:877.70px;top:341.64px;width:1px;height:16.48px;background:#e4e4e4"></div>
<div class="a" style="left:877.70px;top:358.12px;width:1px;height:16.48px;background:#d4d4d4"></div>
<div class="a" style="left:877.70px;top:374.60px;width:1px;height:16.48px;background:#d4d4d4"></div>
<div class="a" style="left:877.70px;top:391.08px;width:1px;height:16.48px;background:#e4e4e4"></div>
<div class="a" style="left:877.70px;top:407.56px;width:1px;height:16.48px;background:#d4d4d4"></div>
<div class="a" style="left:877.70px;top:424.04px;width:1px;height:16.48px;background:#e4e4e4"></div>
<div class="a" style="left:877.70px;top:440.52px;width:1px;height:16.48px;background:#e4e4e4"></div>
<div class="a" style="left:877.70px;top:457.00px;width:1px;height:16.48px;background:#e4e4e4"></div>
<div class="a" style="left:877.70px;top:473.48px;width:1px;height:16.48px;background:#e4e4e4"></div>
<div class="a" style="left:877.70px;top:489.96px;width:1px;height:16.48px;background:#e4e4e4"></div>
<div class="a" style="left:877.70px;top:506.44px;width:1px;height:16.48px;background:#e4e4e4"></div>
<div class="a" style="left:877.70px;top:522.92px;width:1px;height:16.48px;background:#e4e4e4"></div>
<div class="a" style="left:921.16px;top:94.0px;width:1px;height:33.400000000000006px;background:#b1c8e4"></div>
<div class="a" style="left:921.16px;top:127.40px;width:1px;height:16.48px;background:#d4d4d4"></div>
<div class="a" style="left:921.16px;top:143.88px;width:1px;height:16.48px;background:#d4d4d4"></div>
<div class="a" style="left:921.16px;top:160.36px;width:1px;height:16.48px;background:#d4d4d4"></div>
<div class="a" style="left:921.16px;top:176.84px;width:1px;height:16.48px;background:#d4d4d4"></div>
<div class="a" style="left:921.16px;top:193.32px;width:1px;height:16.48px;background:#d4d4d4"></div>
<div class="a" style="left:921.16px;top:209.80px;width:1px;height:16.48px;background:#e4e4e4"></div>
<div class="a" style="left:921.16px;top:226.28px;width:1px;height:16.48px;background:#d4d4d4"></div>
<div class="a" style="left:921.16px;top:242.76px;width:1px;height:16.48px;background:#e4e4e4"></div>
<div class="a" style="left:921.16px;top:259.24px;width:1px;height:16.48px;background:#e4e4e4"></div>
<div class="a" style="left:921.16px;top:275.72px;width:1px;height:16.48px;background:#d4d4d4"></div>
<div class="a" style="left:921.16px;top:292.20px;width:1px;height:16.48px;background:#d4d4d4"></div>
<div class="a" style="left:921.16px;top:308.68px;width:1px;height:16.48px;background:#d4d4d4"></div>
<div class="a" style="left:921.16px;top:325.16px;width:1px;height:16.48px;background:#d4d4d4"></div>
<div class="a" style="left:921.16px;top:341.64px;width:1px;height:16.48px;background:#e4e4e4"></div>
<div class="a" style="left:921.16px;top:358.12px;width:1px;height:16.48px;background:#d4d4d4"></div>
<div class="a" style="left:921.16px;top:374.60px;width:1px;height:16.48px;background:#d4d4d4"></div>
<div class="a" style="left:921.16px;top:391.08px;width:1px;height:16.48px;background:#e4e4e4"></div>
<div class="a" style="left:921.16px;top:407.56px;width:1px;height:16.48px;background:#d4d4d4"></div>
<div class="a" style="left:921.16px;top:424.04px;width:1px;height:16.48px;background:#e4e4e4"></div>
<div class="a" style="left:921.16px;top:440.52px;width:1px;height:16.48px;background:#e4e4e4"></div>
<div class="a" style="left:921.16px;top:457.00px;width:1px;height:16.48px;background:#e4e4e4"></div>
<div class="a" style="left:921.16px;top:473.48px;width:1px;height:16.48px;background:#e4e4e4"></div>
<div class="a" style="left:921.16px;top:489.96px;width:1px;height:16.48px;background:#e4e4e4"></div>
<div class="a" style="left:921.16px;top:506.44px;width:1px;height:16.48px;background:#e4e4e4"></div>
<div class="a" style="left:921.16px;top:522.92px;width:1px;height:16.48px;background:#e4e4e4"></div>
<div class="a" style="left:973.70px;top:94.0px;width:1px;height:33.400000000000006px;background:#b1c8e4"></div>
<div class="a" style="left:973.70px;top:127.40px;width:1px;height:16.48px;background:#e4e4e4"></div>
<div class="a" style="left:973.70px;top:143.88px;width:1px;height:16.48px;background:#e4e4e4"></div>
<div class="a" style="left:973.70px;top:160.36px;width:1px;height:16.48px;background:#e4e4e4"></div>
<div class="a" style="left:973.70px;top:176.84px;width:1px;height:16.48px;background:#e4e4e4"></div>
<div class="a" style="left:973.70px;top:193.32px;width:1px;height:16.48px;background:#e4e4e4"></div>
<div class="a" style="left:973.70px;top:209.80px;width:1px;height:16.48px;background:#e4e4e4"></div>
<div class="a" style="left:973.70px;top:226.28px;width:1px;height:16.48px;background:#e4e4e4"></div>
<div class="a" style="left:973.70px;top:242.76px;width:1px;height:16.48px;background:#e4e4e4"></div>
<div class="a" style="left:973.70px;top:259.24px;width:1px;height:16.48px;background:#e4e4e4"></div>
<div class="a" style="left:973.70px;top:275.72px;width:1px;height:16.48px;background:#e4e4e4"></div>
<div class="a" style="left:973.70px;top:292.20px;width:1px;height:16.48px;background:#e4e4e4"></div>
<div class="a" style="left:973.70px;top:308.68px;width:1px;height:16.48px;background:#e4e4e4"></div>
<div class="a" style="left:973.70px;top:325.16px;width:1px;height:16.48px;background:#e4e4e4"></div>
<div class="a" style="left:973.70px;top:341.64px;width:1px;height:16.48px;background:#e4e4e4"></div>
<div class="a" style="left:973.70px;top:358.12px;width:1px;height:16.48px;background:#e4e4e4"></div>
<div class="a" style="left:973.70px;top:374.60px;width:1px;height:16.48px;background:#e4e4e4"></div>
<div class="a" style="left:973.70px;top:391.08px;width:1px;height:16.48px;background:#e4e4e4"></div>
<div class="a" style="left:973.70px;top:407.56px;width:1px;height:16.48px;background:#e4e4e4"></div>
<div class="a" style="left:973.70px;top:424.04px;width:1px;height:16.48px;background:#e4e4e4"></div>
<div class="a" style="left:973.70px;top:440.52px;width:1px;height:16.48px;background:#e4e4e4"></div>
<div class="a" style="left:973.70px;top:457.00px;width:1px;height:16.48px;background:#e4e4e4"></div>
<div class="a" style="left:973.70px;top:473.48px;width:1px;height:16.48px;background:#e4e4e4"></div>
<div class="a" style="left:973.70px;top:489.96px;width:1px;height:16.48px;background:#e4e4e4"></div>
<div class="a" style="left:973.70px;top:506.44px;width:1px;height:16.48px;background:#e4e4e4"></div>
<div class="a" style="left:973.70px;top:522.92px;width:1px;height:16.48px;background:#e4e4e4"></div>
<div class="a" style="left:0;top:93.6px;width:15.6px;height:1px;background:#c8c8c8"></div>
<div class="a" style="left:15.6px;top:93.6px;width:960px;height:1px;background:#a6b8cf"></div>
<div class="a" style="left:226.3px;top:93.0px;width:43.96px;height:2px;background:#1f6e48"></div>
<div class="a" style="left:0;top:127.40px;width:15.6px;height:16.48px;background:#e1e1e1"></div>
<div class="a" style="left:14.1px;top:127.40px;width:2px;height:16.48px;background:#217346"></div>
<div class="rh" style="top:114.40px;left:2.5px;color:#555">1</div>
<div class="rh" style="top:130.88px;left:2.5px;color:#217346">2</div>
<div class="rh" style="top:147.36px;left:2.5px;color:#555">3</div>
<div class="rh" style="top:163.84px;left:2.5px;color:#555">4</div>
<div class="rh" style="top:180.32px;left:2.5px;color:#555">5</div>
<div class="rh" style="top:196.80px;left:2.5px;color:#555">6</div>
<div class="rh" style="top:213.28px;left:2.5px;color:#555">7</div>
<div class="rh" style="top:229.76px;left:2.5px;color:#555">8</div>
<div class="rh" style="top:246.24px;left:2.5px;color:#555">9</div>
<div class="rh" style="top:262.72px;left:0.6px;color:#555">10</div>
<div class="rh" style="top:279.20px;left:0.6px;color:#555">11</div>
<div class="rh" style="top:295.68px;left:0.6px;color:#555">12</div>
<div class="rh" style="top:312.16px;left:0.6px;color:#555">13</div>
<div class="rh" style="top:328.64px;left:0.6px;color:#555">14</div>
<div class="rh" style="top:345.12px;left:0.6px;color:#555">15</div>
<div class="rh" style="top:361.60px;left:0.6px;color:#555">16</div>
<div class="rh" style="top:378.08px;left:0.6px;color:#555">17</div>
<div class="rh" style="top:394.56px;left:0.6px;color:#555">18</div>
<div class="rh" style="top:411.04px;left:0.6px;color:#555">19</div>
<div class="rh" style="top:427.52px;left:0.6px;color:#555">20</div>
<div class="rh" style="top:444.00px;left:0.6px;color:#555">21</div>
<div class="rh" style="top:460.48px;left:0.6px;color:#555">22</div>
<div class="rh" style="top:476.96px;left:0.6px;color:#555">23</div>
<div class="rh" style="top:493.44px;left:0.6px;color:#555">24</div>
<div class="rh" style="top:509.92px;left:0.6px;color:#555">25</div>
<div class="rh" style="top:526.40px;left:0.6px;color:#555">26</div>
<div class="c l" style="left:228.30px;top:113.40px">Jan</div>
<div class="c l" style="left:271.76px;top:113.40px">Feb</div>
<div class="c l" style="left:315.22px;top:113.40px">Mar</div>
<div class="c l" style="left:358.68px;top:98.00px">-Q1</div>
<div class="c l" style="left:402.14px;top:113.40px">Apr</div>
<div class="c l" style="left:445.60px;top:113.40px">May</div>
<div class="c l" style="left:489.06px;top:113.40px">Jun</div>
<div class="c l" style="left:532.52px;top:98.00px">-Q2</div>
<div class="c l" style="left:575.98px;top:113.40px">Jul</div>
<div class="c l" style="left:619.44px;top:113.40px">Aug</div>
<div class="c l" style="left:662.90px;top:113.40px">Sep</div>
<div class="c l" style="left:706.36px;top:98.00px">-Q3</div>
<div class="c l" style="left:749.82px;top:113.40px">Oct</div>
<div class="c l" style="left:793.28px;top:113.40px">Nov</div>
<div class="c l" style="left:836.74px;top:113.40px">Dec</div>
<div class="c l" style="left:880.20px;top:98.00px">-Q4</div>
<div class="c l" style="left:923.66px;top:98.00px">YearTotal</div>
<div class="c l" style="left:25.60px;top:130.48px">4110: Hardware</div>
<div class="c n" style="right:707.54px;top:130.98px">220,766</div>
<div class="c n" style="right:664.08px;top:130.98px">131,819</div>
<div class="c n" style="right:620.62px;top:130.98px">152,936</div>
<div class="c n" style="right:577.16px;top:130.98px">505,521</div>
<div class="c n" style="right:533.70px;top:130.98px">198,369</div>
<div class="c n" style="right:490.24px;top:130.98px">126,060</div>
<div class="c n" style="right:446.78px;top:130.98px">162,535</div>
<div class="c n" style="right:403.32px;top:130.98px">486,964</div>
<div class="c n" style="right:359.86px;top:130.98px">142,698</div>
<div class="c n" style="right:316.40px;top:130.98px">211,807</div>
<div class="c n" style="right:272.94px;top:130.98px">171,493</div>
<div class="c n" style="right:229.48px;top:130.98px">525,998</div>
<div class="c n" style="right:186.02px;top:130.98px">144,617</div>
<div class="c n" style="right:142.56px;top:130.98px">174,693</div>
<div class="c n" style="right:99.10px;top:130.98px">193,250</div>
<div class="c n" style="right:55.64px;top:130.98px">512,560</div>
<div class="c n" style="right:3.10px;top:130.98px">2,031,043</div>
<div class="c l" style="left:25.60px;top:146.96px">4120: Support</div>
<div class="c n" style="right:707.54px;top:147.46px">22,077</div>
<div class="c n" style="right:664.08px;top:147.46px">15,818</div>
<div class="c n" style="right:620.62px;top:147.46px">15,294</div>
<div class="c n" style="right:577.16px;top:147.46px">53,189</div>
<div class="c n" style="right:533.70px;top:147.46px">19,837</div>
<div class="c n" style="right:490.24px;top:147.46px">12,606</div>
<div class="c n" style="right:446.78px;top:147.46px">16,253</div>
<div class="c n" style="right:403.32px;top:147.46px">48,696</div>
<div class="c n" style="right:359.86px;top:147.46px">14,270</div>
<div class="c n" style="right:316.40px;top:147.46px">21,181</div>
<div class="c n" style="right:272.94px;top:147.46px">17,149</div>
<div class="c n" style="right:229.48px;top:147.46px">52,600</div>
<div class="c n" style="right:186.02px;top:147.46px">14,462</div>
<div class="c n" style="right:142.56px;top:147.46px">17,469</div>
<div class="c n" style="right:99.10px;top:147.46px">19,325</div>
<div class="c n" style="right:55.64px;top:147.46px">51,256</div>
<div class="c n" style="right:3.10px;top:147.46px">205,741</div>
<div class="c l" style="left:25.60px;top:163.44px">4130: Consulting</div>
<div class="c n" style="right:707.54px;top:163.94px">44,153</div>
<div class="c n" style="right:664.08px;top:163.94px">26,364</div>
<div class="c n" style="right:620.62px;top:163.94px">30,587</div>
<div class="c n" style="right:577.16px;top:163.94px">101,104</div>
<div class="c n" style="right:533.70px;top:163.94px">39,674</div>
<div class="c n" style="right:490.24px;top:163.94px">25,212</div>
<div class="c n" style="right:446.78px;top:163.94px">32,507</div>
<div class="c n" style="right:403.32px;top:163.94px">97,393</div>
<div class="c n" style="right:359.86px;top:163.94px">28,540</div>
<div class="c n" style="right:316.40px;top:163.94px">42,361</div>
<div class="c n" style="right:272.94px;top:163.94px">34,299</div>
<div class="c n" style="right:229.48px;top:163.94px">105,200</div>
<div class="c n" style="right:186.02px;top:163.94px">28,923</div>
<div class="c n" style="right:142.56px;top:163.94px">34,939</div>
<div class="c n" style="right:99.10px;top:163.94px">38,650</div>
<div class="c n" style="right:55.64px;top:163.94px">102,512</div>
<div class="c n" style="right:3.10px;top:163.94px">406,209</div>
<div class="c l" style="left:25.60px;top:179.92px">4140: Training</div>
<div class="c n" style="right:707.54px;top:180.42px">11,038</div>
<div class="c n" style="right:664.08px;top:180.42px">6,591</div>
<div class="c n" style="right:620.62px;top:180.42px">7,647</div>
<div class="c n" style="right:577.16px;top:180.42px">25,276</div>
<div class="c n" style="right:533.70px;top:180.42px">9,918</div>
<div class="c n" style="right:490.24px;top:180.42px">6,303</div>
<div class="c n" style="right:446.78px;top:180.42px">8,127</div>
<div class="c n" style="right:403.32px;top:180.42px">24,348</div>
<div class="c n" style="right:359.86px;top:180.42px">7,135</div>
<div class="c n" style="right:316.40px;top:180.42px">10,590</div>
<div class="c n" style="right:272.94px;top:180.42px">8,575</div>
<div class="c n" style="right:229.48px;top:180.42px">26,300</div>
<div class="c n" style="right:186.02px;top:180.42px">7,231</div>
<div class="c n" style="right:142.56px;top:180.42px">8,735</div>
<div class="c n" style="right:99.10px;top:180.42px">9,662</div>
<div class="c n" style="right:55.64px;top:180.42px">25,628</div>
<div class="c n" style="right:3.10px;top:180.42px">101,552</div>
<div class="c l" style="left:25.60px;top:196.40px">4170: Payment Discount</div>
<div class="c n" style="right:707.54px;top:196.90px">2,208</div>
<div class="c n" style="right:664.08px;top:196.90px">1,977</div>
<div class="c n" style="right:620.62px;top:196.90px">3,059</div>
<div class="c n" style="right:577.16px;top:196.90px">7,244</div>
<div class="c n" style="right:533.70px;top:196.90px">1,984</div>
<div class="c n" style="right:490.24px;top:196.90px">1,261</div>
<div class="c n" style="right:446.78px;top:196.90px">1,625</div>
<div class="c n" style="right:403.32px;top:196.90px">4,870</div>
<div class="c n" style="right:359.86px;top:196.90px">1,427</div>
<div class="c n" style="right:316.40px;top:196.90px">2,118</div>
<div class="c n" style="right:272.94px;top:196.90px">1,715</div>
<div class="c n" style="right:229.48px;top:196.90px">5,260</div>
<div class="c n" style="right:186.02px;top:196.90px">1,446</div>
<div class="c n" style="right:142.56px;top:196.90px">1,747</div>
<div class="c n" style="right:99.10px;top:196.90px">1,932</div>
<div class="c n" style="right:55.64px;top:196.90px">5,125</div>
<div class="c n" style="right:3.10px;top:196.90px">22,499</div>
<div class="c l" style="left:18.10px;top:212.88px">-Total Revenue</div>
<div class="c n" style="right:707.54px;top:213.38px">300,242</div>
<div class="c n" style="right:664.08px;top:213.38px">182,569</div>
<div class="c n" style="right:620.62px;top:213.38px">209,523</div>
<div class="c n" style="right:577.16px;top:213.38px">692,334</div>
<div class="c n" style="right:533.70px;top:213.38px">269,782</div>
<div class="c n" style="right:490.24px;top:213.38px">171,442</div>
<div class="c n" style="right:446.78px;top:213.38px">221,047</div>
<div class="c n" style="right:403.32px;top:213.38px">662,271</div>
<div class="c n" style="right:359.86px;top:213.38px">194,070</div>
<div class="c n" style="right:316.40px;top:213.38px">288,057</div>
<div class="c n" style="right:272.94px;top:213.38px">233,231</div>
<div class="c n" style="right:229.48px;top:213.38px">715,358</div>
<div class="c n" style="right:186.02px;top:213.38px">196,679</div>
<div class="c n" style="right:142.56px;top:213.38px">237,583</div>
<div class="c n" style="right:99.10px;top:213.38px">262,819</div>
<div class="c n" style="right:55.64px;top:213.38px">697,081</div>
<div class="c n" style="right:3.10px;top:213.38px">2,767,044</div>
<div class="c l" style="left:25.60px;top:229.36px">5110: Cost of Sales</div>
<div class="c n" style="right:707.54px;top:229.86px">66,230</div>
<div class="c n" style="right:664.08px;top:229.86px">39,546</div>
<div class="c n" style="right:620.62px;top:229.86px">45,881</div>
<div class="c n" style="right:577.16px;top:229.86px">151,657</div>
<div class="c n" style="right:533.70px;top:229.86px">59,511</div>
<div class="c n" style="right:490.24px;top:229.86px">44,121</div>
<div class="c n" style="right:446.78px;top:229.86px">48,760</div>
<div class="c n" style="right:403.32px;top:229.86px">152,392</div>
<div class="c n" style="right:359.86px;top:229.86px">42,809</div>
<div class="c n" style="right:316.40px;top:229.86px">63,542</div>
<div class="c n" style="right:272.94px;top:229.86px">51,448</div>
<div class="c n" style="right:229.48px;top:229.86px">157,799</div>
<div class="c n" style="right:186.02px;top:229.86px">43,385</div>
<div class="c n" style="right:142.56px;top:229.86px">52,408</div>
<div class="c n" style="right:99.10px;top:229.86px">57,975</div>
<div class="c n" style="right:55.64px;top:229.86px">153,768</div>
<div class="c n" style="right:3.10px;top:229.86px">615,616</div>
<div class="c l" style="left:18.10px;top:245.84px">-Total Cost of Sales and Service</div>
<div class="c n" style="right:707.54px;top:246.34px">66,230</div>
<div class="c n" style="right:664.08px;top:246.34px">39,546</div>
<div class="c n" style="right:620.62px;top:246.34px">45,881</div>
<div class="c n" style="right:577.16px;top:246.34px">151,657</div>
<div class="c n" style="right:533.70px;top:246.34px">59,511</div>
<div class="c n" style="right:490.24px;top:246.34px">44,121</div>
<div class="c n" style="right:446.78px;top:246.34px">48,760</div>
<div class="c n" style="right:403.32px;top:246.34px">152,392</div>
<div class="c n" style="right:359.86px;top:246.34px">42,809</div>
<div class="c n" style="right:316.40px;top:246.34px">63,542</div>
<div class="c n" style="right:272.94px;top:246.34px">51,448</div>
<div class="c n" style="right:229.48px;top:246.34px">157,799</div>
<div class="c n" style="right:186.02px;top:246.34px">43,385</div>
<div class="c n" style="right:142.56px;top:246.34px">52,408</div>
<div class="c n" style="right:99.10px;top:246.34px">57,975</div>
<div class="c n" style="right:55.64px;top:246.34px">153,768</div>
<div class="c n" style="right:3.10px;top:246.34px">615,616</div>
<div class="c l" style="left:18.10px;top:262.32px">Gross Profit</div>
<div class="c n" style="right:707.54px;top:262.82px">234,012</div>
<div class="c n" style="right:664.08px;top:262.82px">143,023</div>
<div class="c n" style="right:620.62px;top:262.82px">163,642</div>
<div class="c n" style="right:577.16px;top:262.82px">540,677</div>
<div class="c n" style="right:533.70px;top:262.82px">210,271</div>
<div class="c n" style="right:490.24px;top:262.82px">127,321</div>
<div class="c n" style="right:446.78px;top:262.82px">172,287</div>
<div class="c n" style="right:403.32px;top:262.82px">509,879</div>
<div class="c n" style="right:359.86px;top:262.82px">151,261</div>
<div class="c n" style="right:316.40px;top:262.82px">224,515</div>
<div class="c n" style="right:272.94px;top:262.82px">181,783</div>
<div class="c n" style="right:229.48px;top:262.82px">557,559</div>
<div class="c n" style="right:186.02px;top:262.82px">153,294</div>
<div class="c n" style="right:142.56px;top:262.82px">185,175</div>
<div class="c n" style="right:99.10px;top:262.82px">204,844</div>
<div class="c n" style="right:55.64px;top:262.82px">543,313</div>
<div class="c n" style="right:3.10px;top:262.82px">2,151,428</div>
<div class="c l" style="left:25.60px;top:278.80px">5800: Salaries</div>
<div class="c n" style="right:707.54px;top:279.30px">35,102</div>
<div class="c n" style="right:664.08px;top:279.30px">21,454</div>
<div class="c n" style="right:620.62px;top:279.30px">24,546</div>
<div class="c n" style="right:577.16px;top:279.30px">81,102</div>
<div class="c n" style="right:533.70px;top:279.30px">41,541</div>
<div class="c n" style="right:490.24px;top:279.30px">19,098</div>
<div class="c n" style="right:446.78px;top:279.30px">25,843</div>
<div class="c n" style="right:403.32px;top:279.30px">86,482</div>
<div class="c n" style="right:359.86px;top:279.30px">22,689</div>
<div class="c n" style="right:316.40px;top:279.30px">33,677</div>
<div class="c n" style="right:272.94px;top:279.30px">27,267</div>
<div class="c n" style="right:229.48px;top:279.30px">83,633</div>
<div class="c n" style="right:186.02px;top:279.30px">22,994</div>
<div class="c n" style="right:142.56px;top:279.30px">27,776</div>
<div class="c n" style="right:99.10px;top:279.30px">30,727</div>
<div class="c n" style="right:55.64px;top:279.30px">81,497</div>
<div class="c n" style="right:3.10px;top:279.30px">332,714</div>
<div class="c l" style="left:25.60px;top:295.28px">6110: Payroll Taxes</div>
<div class="c n" style="right:707.54px;top:295.78px">10,531</div>
<div class="c n" style="right:664.08px;top:295.78px">6,436</div>
<div class="c n" style="right:620.62px;top:295.78px">7,364</div>
<div class="c n" style="right:577.16px;top:295.78px">24,331</div>
<div class="c n" style="right:533.70px;top:295.78px">9,462</div>
<div class="c n" style="right:490.24px;top:295.78px">5,729</div>
<div class="c n" style="right:446.78px;top:295.78px">7,753</div>
<div class="c n" style="right:403.32px;top:295.78px">22,944</div>
<div class="c n" style="right:359.86px;top:295.78px">6,807</div>
<div class="c n" style="right:316.40px;top:295.78px">10,103</div>
<div class="c n" style="right:272.94px;top:295.78px">8,180</div>
<div class="c n" style="right:229.48px;top:295.78px">25,090</div>
<div class="c n" style="right:186.02px;top:295.78px">6,898</div>
<div class="c n" style="right:142.56px;top:295.78px">8,333</div>
<div class="c n" style="right:99.10px;top:295.78px">9,218</div>
<div class="c n" style="right:55.64px;top:295.78px">24,449</div>
<div class="c n" style="right:3.10px;top:295.78px">96,814</div>
<div class="c l" style="left:25.60px;top:311.76px">6140: Health and Welfare</div>
<div class="c n" style="right:707.54px;top:312.26px">16,381</div>
<div class="c n" style="right:664.08px;top:312.26px">10,012</div>
<div class="c n" style="right:620.62px;top:312.26px">11,455</div>
<div class="c n" style="right:577.16px;top:312.26px">37,848</div>
<div class="c n" style="right:533.70px;top:312.26px">14,719</div>
<div class="c n" style="right:490.24px;top:312.26px">8,912</div>
<div class="c n" style="right:446.78px;top:312.26px">12,060</div>
<div class="c n" style="right:403.32px;top:312.26px">35,691</div>
<div class="c n" style="right:359.86px;top:312.26px">10,588</div>
<div class="c n" style="right:316.40px;top:312.26px">15,716</div>
<div class="c n" style="right:272.94px;top:312.26px">12,725</div>
<div class="c n" style="right:229.48px;top:312.26px">39,029</div>
<div class="c n" style="right:186.02px;top:312.26px">10,731</div>
<div class="c n" style="right:142.56px;top:312.26px">12,962</div>
<div class="c n" style="right:99.10px;top:312.26px">14,339</div>
<div class="c n" style="right:55.64px;top:312.26px">38,032</div>
<div class="c n" style="right:3.10px;top:312.26px">150,600</div>
<div class="c l" style="left:25.60px;top:328.24px">6160: Other Compensation</div>
<div class="c n" style="right:707.54px;top:328.74px;color:#3d2ae4;font-size:11.5px;-webkit-text-stroke-width:0.12px;top:327.94px">4,500</div>
<div class="c n" style="right:664.08px;top:328.74px">2,300</div>
<div class="c n" style="right:620.62px;top:328.74px">2,500</div>
<div class="c n" style="right:577.16px;top:328.74px">9,300</div>
<div class="c n" style="right:533.70px;top:328.74px;color:#222;font-size:11.5px;-webkit-text-stroke-width:0.12px;top:327.94px">4,100</div>
<div class="c n" style="right:490.24px;top:328.74px">1,500</div>
<div class="c n" style="right:446.78px;top:328.74px;color:#3d2ae4;font-size:11.5px;-webkit-text-stroke-width:0.12px;top:327.94px">4,300</div>
<div class="c n" style="right:403.32px;top:328.74px">9,900</div>
<div class="c n" style="right:359.86px;top:328.74px">1,194</div>
<div class="c n" style="right:316.40px;top:328.74px">1,493</div>
<div class="c n" style="right:272.94px;top:328.74px">1,313</div>
<div class="c n" style="right:229.48px;top:328.74px">4,000</div>
<div class="c n" style="right:186.02px;top:328.74px">1,111</div>
<div class="c n" style="right:142.56px;top:328.74px">1,222</div>
<div class="c n" style="right:99.10px;top:328.74px">1,667</div>
<div class="c n" style="right:55.64px;top:328.74px">4,000</div>
<div class="c n" style="right:3.10px;top:328.74px">27,200</div>
<div class="c l" style="left:18.10px;top:344.72px">-Total Employee Expenses</div>
<div class="c n" style="right:707.54px;top:345.22px">66,514</div>
<div class="c n" style="right:664.08px;top:345.22px">40,202</div>
<div class="c n" style="right:620.62px;top:345.22px">45,865</div>
<div class="c n" style="right:577.16px;top:345.22px">152,581</div>
<div class="c n" style="right:533.70px;top:345.22px">69,822</div>
<div class="c n" style="right:490.24px;top:345.22px">35,239</div>
<div class="c n" style="right:446.78px;top:345.22px">49,956</div>
<div class="c n" style="right:403.32px;top:345.22px">155,017</div>
<div class="c n" style="right:359.86px;top:345.22px">41,278</div>
<div class="c n" style="right:316.40px;top:345.22px">60,989</div>
<div class="c n" style="right:272.94px;top:345.22px">49,485</div>
<div class="c n" style="right:229.48px;top:345.22px">151,752</div>
<div class="c n" style="right:186.02px;top:345.22px">41,734</div>
<div class="c n" style="right:142.56px;top:345.22px">50,293</div>
<div class="c n" style="right:99.10px;top:345.22px">55,951</div>
<div class="c n" style="right:55.64px;top:345.22px">147,978</div>
<div class="c n" style="right:3.10px;top:345.22px">607,328</div>
<div class="c l" style="left:33.10px;top:361.20px">7110: Advertising</div>
<div class="c n" style="right:707.54px;top:361.70px">23,401</div>
<div class="c n" style="right:664.08px;top:361.70px">14,302</div>
<div class="c n" style="right:620.62px;top:361.70px">16,364</div>
<div class="c n" style="right:577.16px;top:361.70px">54,067</div>
<div class="c n" style="right:533.70px;top:361.70px">21,027</div>
<div class="c n" style="right:490.24px;top:361.70px">12,732</div>
<div class="c n" style="right:446.78px;top:361.70px">17,229</div>
<div class="c n" style="right:403.32px;top:361.70px">50,988</div>
<div class="c n" style="right:359.86px;top:361.70px">15,126</div>
<div class="c n" style="right:316.40px;top:361.70px">22,452</div>
<div class="c n" style="right:272.94px;top:361.70px">18,178</div>
<div class="c n" style="right:229.48px;top:361.70px">55,756</div>
<div class="c n" style="right:186.02px;top:361.70px">15,329</div>
<div class="c n" style="right:142.56px;top:361.70px">18,517</div>
<div class="c n" style="right:99.10px;top:361.70px">20,484</div>
<div class="c n" style="right:55.64px;top:361.70px">54,330</div>
<div class="c n" style="right:3.10px;top:361.70px">215,141</div>
<div class="c l" style="left:33.10px;top:377.68px">7420: Rent Expense</div>
<div class="c n" style="right:707.54px;top:378.18px">28,081</div>
<div class="c n" style="right:664.08px;top:378.18px">17,163</div>
<div class="c n" style="right:620.62px;top:378.18px">19,637</div>
<div class="c n" style="right:577.16px;top:378.18px">64,881</div>
<div class="c n" style="right:533.70px;top:378.18px">25,233</div>
<div class="c n" style="right:490.24px;top:378.18px">15,279</div>
<div class="c n" style="right:446.78px;top:378.18px">20,674</div>
<div class="c n" style="right:403.32px;top:378.18px">61,186</div>
<div class="c n" style="right:359.86px;top:378.18px">18,151</div>
<div class="c n" style="right:316.40px;top:378.18px">26,942</div>
<div class="c n" style="right:272.94px;top:378.18px">21,814</div>
<div class="c n" style="right:229.48px;top:378.18px">66,907</div>
<div class="c n" style="right:186.02px;top:378.18px">18,395</div>
<div class="c n" style="right:142.56px;top:378.18px">22,221</div>
<div class="c n" style="right:99.10px;top:378.18px">24,581</div>
<div class="c n" style="right:55.64px;top:378.18px">65,197</div>
<div class="c n" style="right:3.10px;top:378.18px">258,171</div>
<div class="c l" style="left:25.60px;top:394.16px">-Total Office Expenses</div>
<div class="c n" style="right:707.54px;top:394.66px">51,482</div>
<div class="c n" style="right:664.08px;top:394.66px">31,465</div>
<div class="c n" style="right:620.62px;top:394.66px">36,001</div>
<div class="c n" style="right:577.16px;top:394.66px">118,948</div>
<div class="c n" style="right:533.70px;top:394.66px">46,260</div>
<div class="c n" style="right:490.24px;top:394.66px">28,011</div>
<div class="c n" style="right:446.78px;top:394.66px">37,903</div>
<div class="c n" style="right:403.32px;top:394.66px">112,174</div>
<div class="c n" style="right:359.86px;top:394.66px">33,277</div>
<div class="c n" style="right:316.40px;top:394.66px">49,394</div>
<div class="c n" style="right:272.94px;top:394.66px">39,992</div>
<div class="c n" style="right:229.48px;top:394.66px">122,663</div>
<div class="c n" style="right:186.02px;top:394.66px">33,724</div>
<div class="c n" style="right:142.56px;top:394.66px">40,738</div>
<div class="c n" style="right:99.10px;top:394.66px">45,065</div>
<div class="c n" style="right:55.64px;top:394.66px">119,527</div>
<div class="c n" style="right:3.10px;top:394.66px">473,312</div>
<div class="c l" style="left:33.10px;top:410.64px">7699: Miscellaneous Travel Expenses</div>
<div class="c n" style="right:707.54px;top:411.14px">11,701</div>
<div class="c n" style="right:664.08px;top:411.14px">7,151</div>
<div class="c n" style="right:620.62px;top:411.14px">8,182</div>
<div class="c n" style="right:577.16px;top:411.14px">27,034</div>
<div class="c n" style="right:533.70px;top:411.14px">10,514</div>
<div class="c n" style="right:490.24px;top:411.14px">6,366</div>
<div class="c n" style="right:446.78px;top:411.14px">8,614</div>
<div class="c n" style="right:403.32px;top:411.14px">25,494</div>
<div class="c n" style="right:359.86px;top:411.14px">7,563</div>
<div class="c n" style="right:316.40px;top:411.14px">11,226</div>
<div class="c n" style="right:272.94px;top:411.14px">9,089</div>
<div class="c n" style="right:229.48px;top:411.14px">27,878</div>
<div class="c n" style="right:186.02px;top:411.14px">7,665</div>
<div class="c n" style="right:142.56px;top:411.14px">9,259</div>
<div class="c n" style="right:99.10px;top:411.14px">10,242</div>
<div class="c n" style="right:55.64px;top:411.14px">27,166</div>
<div class="c n" style="right:3.10px;top:411.14px">107,572</div>
<div class="c l" style="left:25.60px;top:427.12px">-Total T&amp;E Expenses</div>
<div class="c n" style="right:707.54px;top:427.62px">11,701</div>
<div class="c n" style="right:664.08px;top:427.62px">7,151</div>
<div class="c n" style="right:620.62px;top:427.62px">8,182</div>
<div class="c n" style="right:577.16px;top:427.62px">27,034</div>
<div class="c n" style="right:533.70px;top:427.62px">10,514</div>
<div class="c n" style="right:490.24px;top:427.62px">6,366</div>
<div class="c n" style="right:446.78px;top:427.62px">8,614</div>
<div class="c n" style="right:403.32px;top:427.62px">25,494</div>
<div class="c n" style="right:359.86px;top:427.62px">7,563</div>
<div class="c n" style="right:316.40px;top:427.62px">11,226</div>
<div class="c n" style="right:272.94px;top:427.62px">9,089</div>
<div class="c n" style="right:229.48px;top:427.62px">27,878</div>
<div class="c n" style="right:186.02px;top:427.62px">7,665</div>
<div class="c n" style="right:142.56px;top:427.62px">9,259</div>
<div class="c n" style="right:99.10px;top:427.62px">10,242</div>
<div class="c n" style="right:55.64px;top:427.62px">27,166</div>
<div class="c n" style="right:3.10px;top:427.62px">107,572</div>
<div class="c l" style="left:18.10px;top:443.60px">-Total Operating Expenses</div>
<div class="c n" style="right:707.54px;top:444.10px">63,183</div>
<div class="c n" style="right:664.08px;top:444.10px">38,616</div>
<div class="c n" style="right:620.62px;top:444.10px">44,183</div>
<div class="c n" style="right:577.16px;top:444.10px">145,982</div>
<div class="c n" style="right:533.70px;top:444.10px">56,774</div>
<div class="c n" style="right:490.24px;top:444.10px">34,377</div>
<div class="c n" style="right:446.78px;top:444.10px">46,517</div>
<div class="c n" style="right:403.32px;top:444.10px">137,668</div>
<div class="c n" style="right:359.86px;top:444.10px">40,840</div>
<div class="c n" style="right:316.40px;top:444.10px">60,620</div>
<div class="c n" style="right:272.94px;top:444.10px">49,081</div>
<div class="c n" style="right:229.48px;top:444.10px">150,541</div>
<div class="c n" style="right:186.02px;top:444.10px">41,389</div>
<div class="c n" style="right:142.56px;top:444.10px">49,997</div>
<div class="c n" style="right:99.10px;top:444.10px">55,307</div>
<div class="c n" style="right:55.64px;top:444.10px">146,693</div>
<div class="c n" style="right:3.10px;top:444.10px">580,884</div>
<div class="c l" style="left:18.10px;top:460.08px">OpEx before Allocations</div>
<div class="c n" style="right:707.54px;top:460.58px">129,697</div>
<div class="c n" style="right:664.08px;top:460.58px">78,818</div>
<div class="c n" style="right:620.62px;top:460.58px">90,048</div>
<div class="c n" style="right:577.16px;top:460.58px">298,563</div>
<div class="c n" style="right:533.70px;top:460.58px">126,596</div>
<div class="c n" style="right:490.24px;top:460.58px">69,616</div>
<div class="c n" style="right:446.78px;top:460.58px">96,473</div>
<div class="c n" style="right:403.32px;top:460.58px">292,685</div>
<div class="c n" style="right:359.86px;top:460.58px">82,118</div>
<div class="c n" style="right:316.40px;top:460.58px">121,609</div>
<div class="c n" style="right:272.94px;top:460.58px">98,566</div>
<div class="c n" style="right:229.48px;top:460.58px">302,293</div>
<div class="c n" style="right:186.02px;top:460.58px">83,123</div>
<div class="c n" style="right:142.56px;top:460.58px">100,290</div>
<div class="c n" style="right:99.10px;top:460.58px">111,258</div>
<div class="c n" style="right:55.64px;top:460.58px">294,671</div>
<div class="c n" style="right:3.10px;top:460.58px">1,188,212</div>
<div class="c l" style="left:18.10px;top:476.56px">Operating Expenses</div>
<div class="c n" style="right:707.54px;top:477.06px">129,697</div>
<div class="c n" style="right:664.08px;top:477.06px">78,818</div>
<div class="c n" style="right:620.62px;top:477.06px">90,048</div>
<div class="c n" style="right:577.16px;top:477.06px">298,563</div>
<div class="c n" style="right:533.70px;top:477.06px">126,596</div>
<div class="c n" style="right:490.24px;top:477.06px">69,616</div>
<div class="c n" style="right:446.78px;top:477.06px">96,473</div>
<div class="c n" style="right:403.32px;top:477.06px">292,685</div>
<div class="c n" style="right:359.86px;top:477.06px">82,118</div>
<div class="c n" style="right:316.40px;top:477.06px">121,609</div>
<div class="c n" style="right:272.94px;top:477.06px">98,566</div>
<div class="c n" style="right:229.48px;top:477.06px">302,293</div>
<div class="c n" style="right:186.02px;top:477.06px">83,123</div>
<div class="c n" style="right:142.56px;top:477.06px">100,290</div>
<div class="c n" style="right:99.10px;top:477.06px">111,258</div>
<div class="c n" style="right:55.64px;top:477.06px">294,671</div>
<div class="c n" style="right:3.10px;top:477.06px">1,188,212</div>
<div class="c l" style="left:25.60px;top:493.04px">Pretax Income from Operations</div>
<div class="c n" style="right:707.54px;top:493.54px">104,315</div>
<div class="c n" style="right:664.08px;top:493.54px">64,205</div>
<div class="c n" style="right:620.62px;top:493.54px">73,594</div>
<div class="c n" style="right:577.16px;top:493.54px">242,114</div>
<div class="c n" style="right:533.70px;top:493.54px">83,675</div>
<div class="c n" style="right:490.24px;top:493.54px">57,705</div>
<div class="c n" style="right:446.78px;top:493.54px">75,814</div>
<div class="c n" style="right:403.32px;top:493.54px">217,194</div>
<div class="c n" style="right:359.86px;top:493.54px">69,143</div>
<div class="c n" style="right:316.40px;top:493.54px">102,906</div>
<div class="c n" style="right:272.94px;top:493.54px">83,217</div>
<div class="c n" style="right:229.48px;top:493.54px">255,266</div>
<div class="c n" style="right:186.02px;top:493.54px">70,171</div>
<div class="c n" style="right:142.56px;top:493.54px">84,885</div>
<div class="c n" style="right:99.10px;top:493.54px">93,586</div>
<div class="c n" style="right:55.64px;top:493.54px">248,642</div>
<div class="c n" style="right:3.10px;top:493.54px">963,216</div>
<div class="c l" style="left:18.10px;top:509.52px">-Total Pretax Income</div>
<div class="c n" style="right:707.54px;top:510.02px">104,315</div>
<div class="c n" style="right:664.08px;top:510.02px">64,205</div>
<div class="c n" style="right:620.62px;top:510.02px">73,594</div>
<div class="c n" style="right:577.16px;top:510.02px">242,114</div>
<div class="c n" style="right:533.70px;top:510.02px">83,675</div>
<div class="c n" style="right:490.24px;top:510.02px">57,705</div>
<div class="c n" style="right:446.78px;top:510.02px">75,814</div>
<div class="c n" style="right:403.32px;top:510.02px">217,194</div>
<div class="c n" style="right:359.86px;top:510.02px">69,143</div>
<div class="c n" style="right:316.40px;top:510.02px">102,906</div>
<div class="c n" style="right:272.94px;top:510.02px">83,217</div>
<div class="c n" style="right:229.48px;top:510.02px">255,266</div>
<div class="c n" style="right:186.02px;top:510.02px">70,171</div>
<div class="c n" style="right:142.56px;top:510.02px">84,885</div>
<div class="c n" style="right:99.10px;top:510.02px">93,586</div>
<div class="c n" style="right:55.64px;top:510.02px">248,642</div>
<div class="c n" style="right:3.10px;top:510.02px">963,216</div>
<div class="c l" style="left:18.10px;top:526.00px">Net Income</div>
<div class="c n" style="right:707.54px;top:526.50px">104,315</div>
<div class="c n" style="right:664.08px;top:526.50px">64,205</div>
<div class="c n" style="right:620.62px;top:526.50px">73,594</div>
<div class="c n" style="right:577.16px;top:526.50px">242,114</div>
<div class="c n" style="right:533.70px;top:526.50px">83,675</div>
<div class="c n" style="right:490.24px;top:526.50px">57,705</div>
<div class="c n" style="right:446.78px;top:526.50px">75,814</div>
<div class="c n" style="right:403.32px;top:526.50px">217,194</div>
<div class="c n" style="right:359.86px;top:526.50px">69,143</div>
<div class="c n" style="right:316.40px;top:526.50px">102,906</div>
<div class="c n" style="right:272.94px;top:526.50px">83,217</div>
<div class="c n" style="right:229.48px;top:526.50px">255,266</div>
<div class="c n" style="right:186.02px;top:526.50px">70,171</div>
<div class="c n" style="right:142.56px;top:526.50px">84,885</div>
<div class="c n" style="right:99.10px;top:526.50px">93,586</div>
<div class="c n" style="right:55.64px;top:526.50px">248,642</div>
<div class="c n" style="right:3.10px;top:526.50px">963,216</div>
<div class="a" style="left:225.30px;top:324.16px;width:44.96px;height:17.98px;border:2px solid #111"></div>
<div class="a" style="left:399.14px;top:324.16px;width:44.96px;height:17.98px;border:2px solid #111"></div>
<div class="a" style="left:486.06px;top:324.16px;width:44.96px;height:17.98px;border:2px solid #111"></div>
<div class="a" style="left:225.30px;top:126.20px;width:44.96px;height:18.28px;border:2px solid #2a7650"></div>
<div class="a" style="left:267.16px;top:142.28px;width:4.5px;height:4.5px;background:#2a7650"></div>
<div class="a" style="left:234px;top:201.5px;width:110px;height:23.5px;background:rgba(250,250,250,0.22);border:1px solid rgba(0,0,0,0.09);border-radius:2px"></div>
<svg class="a" style="left:234px;top:201px" width="110" height="25" opacity="0.22"><rect x="8" y="8" width="5" height="4" fill="#e8c040"/><rect x="12" y="10" width="6" height="5" fill="#6080c0"/><rect x="28" y="8" width="5" height="4" fill="#e8c040"/><rect x="32" y="10" width="6" height="5" fill="#6080c0"/><path d="M50 8h7l-2.5 3v4l-2 1v-5z" fill="#555"/><rect x="70" y="8" width="7" height="5" fill="#e8c040"/><rect x="74" y="10" width="5" height="5" fill="#6080c0"/><path d="M85 6v9" stroke="#777"/><path d="M90 10l3 3 3-3" stroke="#555" fill="none"/></svg>
</body></html>
